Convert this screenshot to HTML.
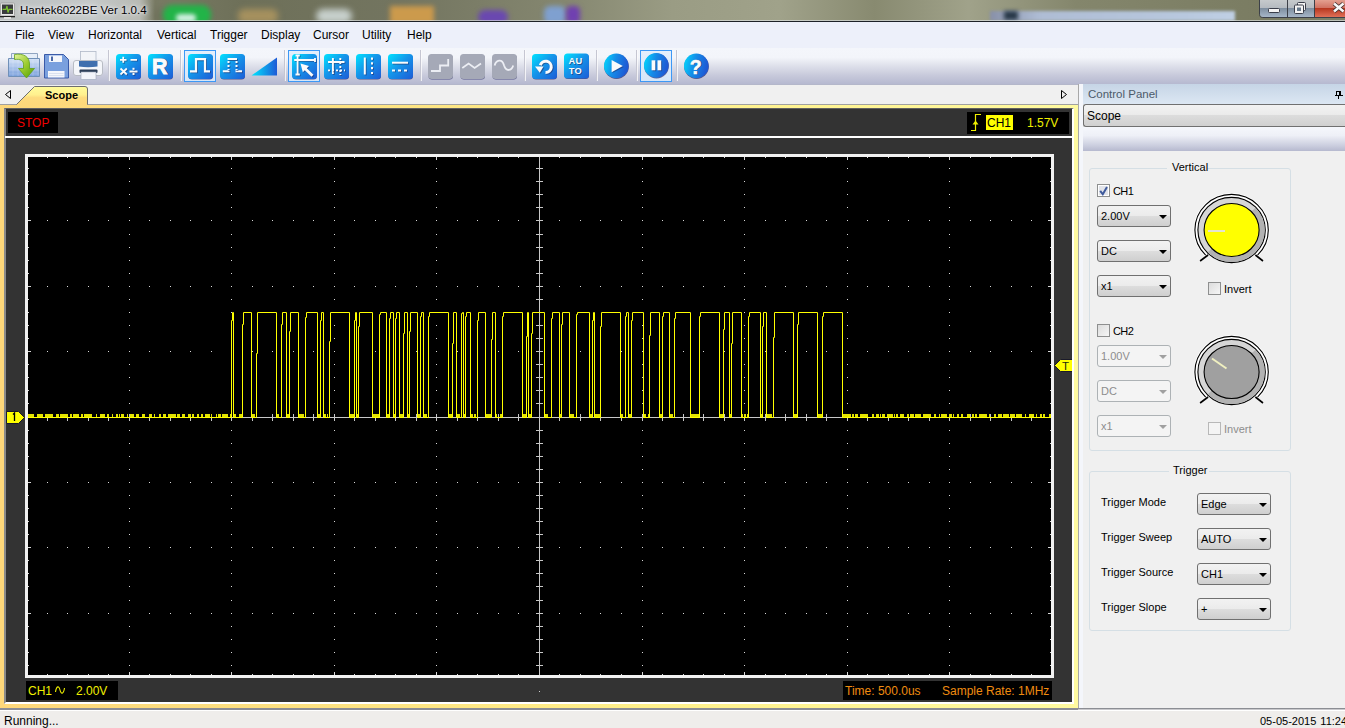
<!DOCTYPE html>
<html><head><meta charset="utf-8">
<style>
*{box-sizing:border-box}
html,body{margin:0;padding:0;width:1345px;height:728px;overflow:hidden;background:#f0f0f0;font-family:"Liberation Sans",sans-serif;font-size:12px;color:#000}
.a{position:absolute}
#title{left:0;top:0;width:1345px;height:22px;background:linear-gradient(90deg,#b8bbb6 0%,#7a7c64 11%,#6e7059 18%,#737560 30%,#858770 42%,#9a9c84 50%,#a0a28a 58%,#888a70 65%,#a0a28a 72%,#84866c 80%,#7a7c62 94%,#7c8068 100%);overflow:hidden}
#title .t{left:20px;top:4px;font-size:11.5px;color:#000;text-shadow:0 0 6px #fff,0 0 3px #eef}
#menu{left:0;top:22px;width:1345px;height:26px;background:#edf0fa}
#menu span{position:absolute;top:6px;font-size:12px}
#tool{left:0;top:48px;width:1345px;height:36px;background:linear-gradient(#f4f6fb 0%,#f3f5fa 26%,#dcdee9 52%,#c6c8da 78%,#b6b9d0 100%)}
.sep{position:absolute;top:5px;width:1px;height:27px;background:#c9cad6;border-right:1px solid #fafafd}
.ic{position:absolute;top:6px;width:25px;height:25px;border-radius:4px;background:linear-gradient(135deg,#08d8f8 0%,#1a8ee8 45%,#1c5fd0 100%);box-shadow:0 1px 1px rgba(20,20,80,.6)}
.gic{position:absolute;top:6px;width:25px;height:25px;border-radius:4px;background:#a9abb6;box-shadow:0 1px 1px rgba(60,60,80,.4)}
.sel{position:absolute;top:2px;width:32px;height:32px;background:#dcebfb;border:1px solid #3d98f5}
#tabbar{left:0;top:84px;width:1078px;height:21px;background:#f0f0f0}
#frame{left:0;top:105px;width:1078px;height:605px;background:linear-gradient(90deg,#fdd77a 0%,#fee683 40%,#fff08a 60%,#fffaa0 100%);border-bottom:2px solid #8c8e96}
#dark{left:4px;top:108px;width:1070px;height:596px;background:#333;border-left:2px solid #8a8a8a;border-top:1px solid #606060;border-right:2px solid #fff;border-bottom:2px solid #fff}
#cp{left:1078px;top:84px;width:267px;height:626px;background:#f0f0f0}
#status{left:0;top:710px;width:1345px;height:18px;background:#efedeb;border-top:1px solid #fff}
.chk{position:absolute;width:13px;height:13px;border:1px solid #8e8f8f;background:linear-gradient(135deg,#dcdcdc,#f6f6f6)}
.cb{position:absolute;height:22px;border:1px solid #707070;border-radius:3px;background:linear-gradient(#f2f2f2 0%,#ebebeb 50%,#dddddd 51%,#cfcfcf 100%);font-size:11px;padding-left:3px;line-height:21px}
.cb:after{content:"";position:absolute;right:3px;top:9px;border-left:4px solid transparent;border-right:4px solid transparent;border-top:4px solid #000}
.cb.dis{border-color:#adb2b5;background:#f4f4f4;color:#8d8d8d}
.cb.dis:after{border-top-color:#a0a0a0}
.grp{position:absolute;border:1px solid #d5dfe5;border-radius:3px}
.lbl{position:absolute;font-size:11px}
</style></head><body>
<div id="title" class="a">
  <div class="a" style="left:150px;top:0;width:40px;height:22px;background:linear-gradient(#7a7c66,#6c6e58);filter:blur(4px)"></div>
  <div class="a" style="left:163px;top:5px;width:48px;height:20px;background:#22b448;border-radius:9px;filter:blur(2.5px)"></div>
  <div class="a" style="left:176px;top:14px;width:20px;height:8px;background:#d0f0e0;border-radius:5px;filter:blur(2px)"></div>
  <div class="a" style="left:238px;top:9px;width:40px;height:14px;background:#a6915e;border-radius:6px;filter:blur(3px)"></div>
  <div class="a" style="left:316px;top:9px;width:36px;height:14px;background:#c7d0cc;border-radius:7px;filter:blur(3px)"></div>
  <div class="a" style="left:390px;top:6px;width:44px;height:18px;background:#cc9a4c;filter:blur(2.5px)"></div>
  <div class="a" style="left:478px;top:10px;width:30px;height:14px;background:#6a48b0;border-radius:8px;filter:blur(2.5px)"></div>
  <div class="a" style="left:544px;top:6px;width:22px;height:18px;background:#7fa0d0;border-radius:6px;filter:blur(2.5px)"></div>
  <div class="a" style="left:566px;top:6px;width:14px;height:18px;background:#7040b0;border-radius:5px;filter:blur(2.5px)"></div>
  <div class="a" style="left:990px;top:11px;width:245px;height:10px;background:linear-gradient(90deg,#8890a8,#aebcd4 20%,#b8c8de 80%,#c0d0e4);filter:blur(1.5px)"></div>
  <div class="a" style="left:1004px;top:11px;width:14px;height:9px;background:#283848;filter:blur(2px)"></div>
  <div class="a" style="left:0;top:0;width:155px;height:21px;background:linear-gradient(90deg,#bcc0c0 0%,#c4c8c8 60%,#b8bab4 90%,rgba(184,186,180,0) 100%)"></div>
  <svg class="a" style="left:0;top:0" width="1345" height="22">
    <rect x="0.5" y="3" width="14" height="13" rx="1" fill="#e8e8e8" stroke="#9a9a9a" stroke-width="0.8"/>
    <rect x="2" y="4.5" width="11" height="9.5" fill="#3a3c3e"/>
    <path d="M2.5,9.3 H6 L7,6 L8,12.5 L9,9.3 H12.5" fill="none" stroke="#7cc030" stroke-width="1.2"/>
    <rect x="0" y="16" width="15" height="1.3" fill="#202020"/>
    <rect x="4" y="17" width="7" height="2" fill="#e0e0e0"/>
    <path d="M1259.5,0 V14.5 Q1259.5,17.5 1262.5,17.5 H1345" fill="none" stroke="#3c4048" stroke-width="1"/>
    <path d="M1260,0 H1287 V17 H1263 Q1260,17 1260,14 Z" fill="url(#tbg)"/>
    <rect x="1288" y="0" width="26" height="17" fill="url(#tbg)"/>
    <rect x="1315" y="0" width="30" height="17" fill="url(#tbr)"/>
    <path d="M1287.5,0 V17 M1314.5,0 V17" stroke="#3c4048" stroke-width="1"/>
    <rect x="1268.5" y="8.5" width="11" height="4" rx="1" fill="#f4f4f4" stroke="#3a3e4a" stroke-width="1"/>
    <rect x="1297.5" y="2.5" width="8" height="8" rx="1" fill="#f4f4f4" stroke="#3a3e4a" stroke-width="1"/>
    <rect x="1294.5" y="5" width="9" height="8.5" rx="1" fill="#f4f4f4" stroke="#3a3e4a" stroke-width="1"/>
    <rect x="1297" y="7.5" width="4" height="3.5" fill="#66788a"/>
    <path d="M1334,3.5 L1343.5,11.5 M1343.5,3.5 L1334,11.5" stroke="#3a2a2a" stroke-width="4.2"/>
    <path d="M1334,3.5 L1343.5,11.5 M1343.5,3.5 L1334,11.5" stroke="#f8f8f8" stroke-width="2.6"/>
    <defs>
      <linearGradient id="tbg" x1="0" y1="0" x2="0" y2="1"><stop offset="0" stop-color="#c6cacc"/><stop offset="0.48" stop-color="#b4bac0"/><stop offset="0.5" stop-color="#7f8fa0"/><stop offset="1" stop-color="#a6b6c8"/></linearGradient>
      <linearGradient id="tbr" x1="0" y1="0" x2="0" y2="1"><stop offset="0" stop-color="#e4a090"/><stop offset="0.48" stop-color="#d07060"/><stop offset="0.5" stop-color="#b83820"/><stop offset="1" stop-color="#e07058"/></linearGradient>
    </defs>
    <rect x="0" y="20" width="1345" height="1" fill="#e8ecf0" opacity="0.6"/>
    <rect x="0" y="21" width="1345" height="1" fill="#1e2228"/>
  </svg>
  <div class="t a">Hantek6022BE Ver 1.0.4</div>
</div>
<div id="menu" class="a">
  <span style="left:15px">File</span>
  <span style="left:48px">View</span>
  <span style="left:88px">Horizontal</span>
  <span style="left:157px">Vertical</span>
  <span style="left:210px">Trigger</span>
  <span style="left:261px">Display</span>
  <span style="left:313px">Cursor</span>
  <span style="left:362px">Utility</span>
  <span style="left:407px">Help</span>
</div>
<div id="tool" class="a">
<svg class="a" style="left:0;top:0" width="720" height="36" viewBox="0 48 720 36"><defs>
<linearGradient id="gb" x1="0" y1="0" x2="1" y2="1"><stop offset="0" stop-color="#00e4ff"/><stop offset="0.45" stop-color="#1496ea"/><stop offset="1" stop-color="#1d5cd6"/></linearGradient>
<linearGradient id="gc" x1="0" y1="0" x2="1" y2="0.25"><stop offset="0" stop-color="#00e0ff"/><stop offset="0.5" stop-color="#148ce8"/><stop offset="1" stop-color="#1e5ad4"/></linearGradient>
<linearGradient id="gt" x1="0" y1="0" x2="1" y2="0"><stop offset="0" stop-color="#00e6ff"/><stop offset="1" stop-color="#1e5ad6"/></linearGradient>
<linearGradient id="gsel" x1="0" y1="0" x2="0" y2="1"><stop offset="0" stop-color="#e4effc"/><stop offset="1" stop-color="#d6e6f8"/></linearGradient>
<linearGradient id="gfold" x1="0" y1="0" x2="0" y2="1"><stop offset="0" stop-color="#d4e2f6"/><stop offset="1" stop-color="#7aa0dc"/></linearGradient>
<linearGradient id="garr" x1="0" y1="0" x2="1" y2="1"><stop offset="0" stop-color="#e4f49a"/><stop offset="0.5" stop-color="#9ccc30"/><stop offset="1" stop-color="#50a000"/></linearGradient>
</defs><path d="M11.5,53.5 H37.5 V60 H11.5 Z" fill="#e6eef8" stroke="#90a4c0" stroke-width="1"/><path d="M8.5,58.5 H39.5 V76.5 H8.5 Z" fill="url(#gfold)" stroke="#7090b8" stroke-width="1"/><path d="M9,62 H39 M9,66 H39 M9,70 H39 M9,74 H39 M13,59 V76 M18,59 V76 M23,59 V76 M28,59 V76 M33,59 V76 M38,59 V76" stroke="#ffffff" stroke-width="0.5" opacity="0.35"/><path d="M14.5,54.5 C24,53 29.5,57 29.5,64 L29.5,68.5 L34.5,68.5 L26.5,78 L18.5,68.5 L23.5,68.5 L23.5,64.5 C23.5,60.5 20.5,58.8 14.5,59.5 Z" fill="url(#garr)" stroke="#62a018" stroke-width="0.8"/><path d="M44.5,54.5 H63.5 L68.5,59.5 V78 H44.5 Z" fill="#7aa0de" stroke="#3a5aa8" stroke-width="1"/><rect x="49" y="55.5" width="13" height="6.5" fill="#f4f6fb"/><rect x="51" y="56.5" width="2" height="4.5" fill="#4a68a8"/><rect x="48" y="71" width="16.5" height="6.5" fill="#f4f6fb"/><path d="M49,73.5 H63.5 M49,75.5 H63.5" stroke="#c8d4e8" stroke-width="0.6"/><rect x="80.5" y="51.5" width="15.5" height="10" fill="#f2f4f8" stroke="#b0b8c8" stroke-width="0.8"/><rect x="73.5" y="60.5" width="29" height="15" rx="2.5" fill="#f4f6fa" stroke="#b8bcc4" stroke-width="1"/><path d="M79,61 H97.5 V66.5 Q88,68 79,66.5 Z" fill="#3f6fae"/><rect x="79.5" y="69.5" width="18" height="3.5" rx="1" fill="#2c3e58"/><rect x="81" y="72" width="15" height="7.5" fill="#f2f4fa" stroke="#9aa6b8" stroke-width="0.6"/><rect x="108" y="50" width="1" height="31" fill="#c5c6d2"/><rect x="109" y="50" width="1" height="31" fill="#fbfbfd" opacity="0.8"/><rect x="116.5" y="55" width="24.5" height="24.5" rx="3.5" fill="#28286a" opacity="0.75"/><rect x="116" y="54" width="25" height="25" rx="3.5" fill="url(#gb)"/><g transform="translate(0.9,0.9)" opacity="0.55"><path d="M120,59.8 H126.5 M123.25,56.8 V62.8 M130.5,59.8 H137" stroke="#262c60" stroke-width="1.8"/></g><path d="M120,59.8 H126.5 M123.25,56.8 V62.8 M130.5,59.8 H137" stroke="#fbfbfb" stroke-width="1.8"/><g transform="translate(0.9,0.9)" opacity="0.55"><path d="M120.5,68.5 L126.8,74.5 M126.8,68.5 L120.5,74.5 M129.5,71.5 H137.5" stroke="#262c60" stroke-width="1.8"/></g><path d="M120.5,68.5 L126.8,74.5 M126.8,68.5 L120.5,74.5 M129.5,71.5 H137.5" stroke="#fbfbfb" stroke-width="1.8"/><g transform="translate(0.9,0.9)" opacity="0.55"><rect x="132.5" y="67.8" width="2" height="2" fill="#262c60"/><rect x="132.5" y="73" width="2" height="2" fill="#262c60"/></g><rect x="132.5" y="67.8" width="2" height="2" fill="#fbfbfb"/><rect x="132.5" y="73" width="2" height="2" fill="#fbfbfb"/><rect x="148.5" y="55" width="24.5" height="24.5" rx="3.5" fill="#28286a" opacity="0.75"/><rect x="148" y="54" width="25" height="25" rx="3.5" fill="url(#gb)"/><g transform="translate(0.9,0.9)" opacity="0.55"><text x="152" y="73.5" font-family="Liberation Sans" font-weight="bold" font-size="21.5" fill="#262c60" stroke="#262c60" stroke-width="0.9">R</text></g><text x="152" y="73.5" font-family="Liberation Sans" font-weight="bold" font-size="21.5" fill="#fbfbfb" stroke="#fbfbfb" stroke-width="0.9">R</text><rect x="180" y="50" width="1" height="31" fill="#c5c6d2"/><rect x="181" y="50" width="1" height="31" fill="#fbfbfd" opacity="0.8"/><rect x="184.5" y="50.5" width="31" height="31" fill="url(#gsel)" stroke="#3d98f5" stroke-width="1"/><rect x="188.5" y="55" width="24.5" height="24.5" rx="3.5" fill="#28286a" opacity="0.75"/><rect x="188" y="54" width="25" height="25" rx="3.5" fill="url(#gb)"/><g transform="translate(0.9,0.9)" opacity="0.55"><path d="M190,71.3 H196 V59.2 H205 V71.3 H210" fill="none" stroke="#262c60" stroke-width="2.2"/></g><path d="M190,71.3 H196 V59.2 H205 V71.3 H210" fill="none" stroke="#fbfbfb" stroke-width="2.2"/><rect x="220.5" y="55" width="24.5" height="24.5" rx="3.5" fill="#28286a" opacity="0.75"/><rect x="220" y="54" width="25" height="25" rx="3.5" fill="url(#gb)"/><g transform="translate(0.9,0.9)" opacity="0.55"><path d="M227.5,59 H237 M222.8,71.3 H229.5 M235.5,71.3 H242" stroke="#262c60" stroke-width="2"/></g><path d="M227.5,59 H237 M222.8,71.3 H229.5 M235.5,71.3 H242" stroke="#fbfbfb" stroke-width="2"/><g transform="translate(0.9,0.9)" opacity="0.55"><path d="M228.5,61 V70 M236.5,61 V70" stroke="#262c60" stroke-width="2" stroke-dasharray="2,2"/></g><path d="M228.5,61 V70 M236.5,61 V70" stroke="#fbfbfb" stroke-width="2" stroke-dasharray="2,2"/><path d="M251.5,75.5 L277,57.5 L277,75.5 Z" fill="url(#gt)"/><rect x="284" y="50" width="1" height="31" fill="#c5c6d2"/><rect x="285" y="50" width="1" height="31" fill="#fbfbfd" opacity="0.8"/><rect x="288.5" y="50.5" width="31" height="31" fill="url(#gsel)" stroke="#3d98f5" stroke-width="1"/><rect x="292.5" y="55" width="24.5" height="24.5" rx="3.5" fill="#28286a" opacity="0.75"/><rect x="292" y="54" width="25" height="25" rx="3.5" fill="url(#gb)"/><g transform="translate(0.9,0.9)" opacity="0.55"><path d="M297.6,55.5 V74.5 M295.5,55.5 H299.8 M295.5,74.5 H299.8 M294.2,60 H315 M315,58 V62" stroke="#262c60" stroke-width="1.8"/></g><path d="M297.6,55.5 V74.5 M295.5,55.5 H299.8 M295.5,74.5 H299.8 M294.2,60 H315 M315,58 V62" stroke="#fbfbfb" stroke-width="1.8"/><g transform="translate(0.9,0.9)" opacity="0.55"><path d="M300.5,63.5 L309,66 L306.8,68.2 L313.5,74.8 L311.5,76.8 L304.8,70.2 L302.8,72.2 Z" fill="#262c60"/></g><path d="M300.5,63.5 L309,66 L306.8,68.2 L313.5,74.8 L311.5,76.8 L304.8,70.2 L302.8,72.2 Z" fill="#fbfbfb"/><rect x="324.5" y="55" width="24.5" height="24.5" rx="3.5" fill="#28286a" opacity="0.75"/><rect x="324" y="54" width="25" height="25" rx="3.5" fill="url(#gb)"/><g transform="translate(0.9,0.9)" opacity="0.55"><path d="M332.9,58 V74 M328,62 H344.5" stroke="#262c60" stroke-width="1.9"/></g><path d="M332.9,58 V74 M328,62 H344.5" stroke="#fbfbfb" stroke-width="1.9"/><g transform="translate(0.9,0.9)" opacity="0.55"><path d="M340.3,58 V75 M328,70.4 H345" stroke="#262c60" stroke-width="1.9" stroke-dasharray="2,2"/></g><path d="M340.3,58 V75 M328,70.4 H345" stroke="#fbfbfb" stroke-width="1.9" stroke-dasharray="2,2"/><rect x="356.5" y="55" width="24.5" height="24.5" rx="3.5" fill="#28286a" opacity="0.75"/><rect x="356" y="54" width="25" height="25" rx="3.5" fill="url(#gb)"/><g transform="translate(0.9,0.9)" opacity="0.55"><path d="M364.8,57.5 V74.5" stroke="#262c60" stroke-width="2"/></g><path d="M364.8,57.5 V74.5" stroke="#fbfbfb" stroke-width="2"/><g transform="translate(0.9,0.9)" opacity="0.55"><path d="M372,57.5 V75" stroke="#262c60" stroke-width="2" stroke-dasharray="2.2,2.6"/></g><path d="M372,57.5 V75" stroke="#fbfbfb" stroke-width="2" stroke-dasharray="2.2,2.6"/><rect x="388.5" y="55" width="24.5" height="24.5" rx="3.5" fill="#28286a" opacity="0.75"/><rect x="388" y="54" width="25" height="25" rx="3.5" fill="url(#gb)"/><g transform="translate(0.9,0.9)" opacity="0.55"><path d="M392,62.7 H408" stroke="#262c60" stroke-width="2"/></g><path d="M392,62.7 H408" stroke="#fbfbfb" stroke-width="2"/><g transform="translate(0.9,0.9)" opacity="0.55"><path d="M392,70.4 H409" stroke="#262c60" stroke-width="2" stroke-dasharray="3,3"/></g><path d="M392,70.4 H409" stroke="#fbfbfb" stroke-width="2" stroke-dasharray="3,3"/><rect x="420" y="50" width="1" height="31" fill="#c5c6d2"/><rect x="421" y="50" width="1" height="31" fill="#fbfbfd" opacity="0.8"/><rect x="428.5" y="55" width="24.5" height="24.5" rx="3.5" fill="#28286a" opacity="0.75"/><rect x="428" y="54" width="25" height="25" rx="3.5" fill="#a5a9b7"/><path d="M431,71 H440 V65.5 H448.2 V59" fill="none" stroke="#eceef4" stroke-width="1.8"/><rect x="460.5" y="55" width="24.5" height="24.5" rx="3.5" fill="#28286a" opacity="0.75"/><rect x="460" y="54" width="25" height="25" rx="3.5" fill="#a5a9b7"/><path d="M462.3,68 L468.6,63.6 L474.6,68 L481,63.6" fill="none" stroke="#eceef4" stroke-width="1.8"/><rect x="492.5" y="55" width="24.5" height="24.5" rx="3.5" fill="#28286a" opacity="0.75"/><rect x="492" y="54" width="25" height="25" rx="3.5" fill="#a5a9b7"/><path d="M494.6,65.5 C496,60 502,58 504,65.3 C506,72 511.5,71 513.2,65.5" fill="none" stroke="#eceef4" stroke-width="1.8"/><rect x="524" y="50" width="1" height="31" fill="#c5c6d2"/><rect x="525" y="50" width="1" height="31" fill="#fbfbfd" opacity="0.8"/><rect x="532.5" y="55" width="24.5" height="24.5" rx="3.5" fill="#28286a" opacity="0.75"/><rect x="532" y="54" width="25" height="25" rx="3.5" fill="url(#gb)"/><g transform="translate(0.9,0.9)" opacity="0.55"><path d="M540.3,65.2 A5.6,5.6 0 1 1 545.5,72.4" fill="none" stroke="#262c60" stroke-width="3"/></g><path d="M540.3,65.2 A5.6,5.6 0 1 1 545.5,72.4" fill="none" stroke="#fbfbfb" stroke-width="3"/><g transform="translate(0.9,0.9)" opacity="0.55"><path d="M535,66.5 L543.5,66.5 L539.8,72.8 Z" fill="#262c60"/></g><path d="M535,66.5 L543.5,66.5 L539.8,72.8 Z" fill="#fbfbfb"/><rect x="564.5" y="54.5" width="24.5" height="24.5" rx="3.5" fill="#28286a" opacity="0.75"/><rect x="564" y="53.5" width="25" height="25" rx="3.5" fill="url(#gb)"/><g transform="translate(0.9,0.9)" opacity="0.55"><text x="568.6" y="64" font-family="Liberation Sans" font-weight="bold" font-size="9.3" fill="#262c60" letter-spacing="0.3">AU</text></g><text x="568.6" y="64" font-family="Liberation Sans" font-weight="bold" font-size="9.3" fill="#fbfbfb" letter-spacing="0.3">AU</text><g transform="translate(0.9,0.9)" opacity="0.55"><text x="568.8" y="74.2" font-family="Liberation Sans" font-weight="bold" font-size="9.3" fill="#262c60" letter-spacing="0.3">TO</text></g><text x="568.8" y="74.2" font-family="Liberation Sans" font-weight="bold" font-size="9.3" fill="#fbfbfb" letter-spacing="0.3">TO</text><rect x="596" y="50" width="1" height="31" fill="#c5c6d2"/><rect x="597" y="50" width="1" height="31" fill="#fbfbfd" opacity="0.8"/><circle cx="616.5" cy="66.5" r="12.4" fill="#28286a" opacity="0.7"/><circle cx="616.3" cy="65.9" r="12.3" fill="url(#gc)"/><g transform="translate(0.9,0.9)" opacity="0.55"><path d="M611.6,59.9 L622.8,66 L611.6,72.2 Z" fill="#262c60"/></g><path d="M611.6,59.9 L622.8,66 L611.6,72.2 Z" fill="#fbfbfb"/><rect x="636" y="50" width="1" height="31" fill="#c5c6d2"/><rect x="637" y="50" width="1" height="31" fill="#fbfbfd" opacity="0.8"/><rect x="640.5" y="50.5" width="31" height="31" fill="url(#gsel)" stroke="#3d98f5" stroke-width="1"/><circle cx="656.5" cy="66" r="12.4" fill="#28286a" opacity="0.7"/><circle cx="656.3" cy="65.4" r="12.3" fill="url(#gc)"/><g transform="translate(0.9,0.9)" opacity="0.55"><rect x="651.6" y="60.3" width="3.7" height="10" fill="#262c60"/><rect x="657.5" y="60.3" width="3.7" height="10" fill="#262c60"/></g><rect x="651.6" y="60.3" width="3.7" height="10" fill="#fbfbfb"/><rect x="657.5" y="60.3" width="3.7" height="10" fill="#fbfbfb"/><rect x="676" y="50" width="1" height="31" fill="#c5c6d2"/><rect x="677" y="50" width="1" height="31" fill="#fbfbfd" opacity="0.8"/><circle cx="696.5" cy="66.5" r="12.4" fill="#28286a" opacity="0.7"/><circle cx="696.3" cy="65.9" r="12.3" fill="url(#gc)"/><g transform="translate(0.9,0.9)" opacity="0.55"><text x="689.8" y="73.6" font-family="Liberation Sans" font-weight="bold" font-size="19.5" fill="#262c60" stroke="#262c60" stroke-width="0.6">?</text></g><text x="689.8" y="73.6" font-family="Liberation Sans" font-weight="bold" font-size="19.5" fill="#fbfbfb" stroke="#fbfbfb" stroke-width="0.6">?</text></svg>
</div>
<div id="tabbar" class="a">
  <svg class="a" style="left:0;top:0" width="1078" height="21" viewBox="0 84 1078 21">
    <defs><linearGradient id="gtab" x1="0" y1="0" x2="0" y2="1"><stop offset="0" stop-color="#fffc9c"/><stop offset="0.45" stop-color="#fff08e"/><stop offset="0.6" stop-color="#fddb7e"/><stop offset="1" stop-color="#fdd77a"/></linearGradient></defs>
    <path d="M0,84.5 H1078" stroke="#b4b7ca" stroke-width="1"/>
    <path d="M16.5,104.5 L34.5,86.5 H85 Q87.5,86.5 87.5,89 V105 H16.5 Z" fill="url(#gtab)"/>
    <path d="M0,104.5 H16.5 L34.5,86.5 H85 Q87.5,86.5 87.5,89 V104.5 H1078" fill="none" stroke="#6e6e6e" stroke-width="1"/>
    <path d="M88,104.5 H1078 M0,104.5 H16" stroke="#a0a0a0" stroke-width="1"/>
    <path d="M10.5,90.5 L5.5,94.5 L10.5,98.5 Z" fill="none" stroke="#000" stroke-width="1"/>
    <path d="M1061.5,90.5 L1066.5,94.5 L1061.5,98.5 Z" fill="none" stroke="#000" stroke-width="1"/>
  </svg>
  <div class="a" style="left:45px;top:5px;font-size:11px;font-weight:bold">Scope</div>
</div>
<div id="frame" class="a"></div>
<div id="dark" class="a"></div>
<!--SCOPE-->
<div class="a" style="left:8px;top:112px;width:50px;height:21px;background:#000"></div>
<div class="a" style="left:17px;top:116px;font-size:12px;color:#f00000">STOP</div>
<div class="a" style="left:967px;top:112px;width:102px;height:22px;background:#000"></div>
<div class="a" style="left:986px;top:115px;width:27px;height:15px;background:#ffff00"></div>
<div class="a" style="left:987px;top:116px;font-size:12px;color:#000">CH1</div>
<div class="a" style="left:1027px;top:116px;font-size:12px;color:#f0f000">1.57V</div>
<div class="a" style="left:5px;top:136px;width:1067px;height:2px;background:#fff"></div>
<div class="a" style="left:25px;top:154px;width:1029px;height:524px;background:#f2f2f2"></div>
<div class="a" style="left:26px;top:681px;width:92px;height:19px;background:#000"></div>
<div class="a" style="left:28px;top:684px;font-size:12px;color:#f0f000">CH1</div>
<div class="a" style="left:76px;top:684px;font-size:12px;color:#f0f000">2.00V</div>
<div class="a" style="left:843px;top:681px;width:209px;height:19px;background:#000"></div>
<div class="a" style="left:845px;top:684px;font-size:12px;color:#f08c10">Time: 500.0us</div>
<div class="a" style="left:942px;top:684px;font-size:12px;color:#f08c10">Sample Rate: 1MHz</div>
<svg class="a" style="left:0;top:0" width="1345" height="728" viewBox="0 0 1345 728"><rect x="28" y="157" width="1023" height="518" fill="#000"/><rect x="129" y="168" width="1" height="1" fill="#d8d8d8"/><rect x="129" y="181" width="1" height="1" fill="#d8d8d8"/><rect x="129" y="194" width="1" height="1" fill="#d8d8d8"/><rect x="129" y="207" width="1" height="1" fill="#d8d8d8"/><rect x="129" y="220" width="1" height="1" fill="#d8d8d8"/><rect x="129" y="234" width="1" height="1" fill="#d8d8d8"/><rect x="129" y="247" width="1" height="1" fill="#d8d8d8"/><rect x="129" y="260" width="1" height="1" fill="#d8d8d8"/><rect x="129" y="273" width="1" height="1" fill="#d8d8d8"/><rect x="129" y="286" width="1" height="1" fill="#d8d8d8"/><rect x="129" y="299" width="1" height="1" fill="#d8d8d8"/><rect x="129" y="312" width="1" height="1" fill="#d8d8d8"/><rect x="129" y="325" width="1" height="1" fill="#d8d8d8"/><rect x="129" y="338" width="1" height="1" fill="#d8d8d8"/><rect x="129" y="351" width="1" height="1" fill="#d8d8d8"/><rect x="129" y="364" width="1" height="1" fill="#d8d8d8"/><rect x="129" y="377" width="1" height="1" fill="#d8d8d8"/><rect x="129" y="390" width="1" height="1" fill="#d8d8d8"/><rect x="129" y="403" width="1" height="1" fill="#d8d8d8"/><rect x="129" y="417" width="1" height="1" fill="#d8d8d8"/><rect x="129" y="430" width="1" height="1" fill="#d8d8d8"/><rect x="129" y="443" width="1" height="1" fill="#d8d8d8"/><rect x="129" y="456" width="1" height="1" fill="#d8d8d8"/><rect x="129" y="469" width="1" height="1" fill="#d8d8d8"/><rect x="129" y="482" width="1" height="1" fill="#d8d8d8"/><rect x="129" y="495" width="1" height="1" fill="#d8d8d8"/><rect x="129" y="508" width="1" height="1" fill="#d8d8d8"/><rect x="129" y="521" width="1" height="1" fill="#d8d8d8"/><rect x="129" y="534" width="1" height="1" fill="#d8d8d8"/><rect x="129" y="547" width="1" height="1" fill="#d8d8d8"/><rect x="129" y="560" width="1" height="1" fill="#d8d8d8"/><rect x="129" y="573" width="1" height="1" fill="#d8d8d8"/><rect x="129" y="586" width="1" height="1" fill="#d8d8d8"/><rect x="129" y="600" width="1" height="1" fill="#d8d8d8"/><rect x="129" y="613" width="1" height="1" fill="#d8d8d8"/><rect x="129" y="626" width="1" height="1" fill="#d8d8d8"/><rect x="129" y="639" width="1" height="1" fill="#d8d8d8"/><rect x="129" y="652" width="1" height="1" fill="#d8d8d8"/><rect x="129" y="665" width="1" height="1" fill="#d8d8d8"/><rect x="231" y="168" width="1" height="1" fill="#d8d8d8"/><rect x="231" y="181" width="1" height="1" fill="#d8d8d8"/><rect x="231" y="194" width="1" height="1" fill="#d8d8d8"/><rect x="231" y="207" width="1" height="1" fill="#d8d8d8"/><rect x="231" y="220" width="1" height="1" fill="#d8d8d8"/><rect x="231" y="234" width="1" height="1" fill="#d8d8d8"/><rect x="231" y="247" width="1" height="1" fill="#d8d8d8"/><rect x="231" y="260" width="1" height="1" fill="#d8d8d8"/><rect x="231" y="273" width="1" height="1" fill="#d8d8d8"/><rect x="231" y="286" width="1" height="1" fill="#d8d8d8"/><rect x="231" y="299" width="1" height="1" fill="#d8d8d8"/><rect x="231" y="312" width="1" height="1" fill="#d8d8d8"/><rect x="231" y="325" width="1" height="1" fill="#d8d8d8"/><rect x="231" y="338" width="1" height="1" fill="#d8d8d8"/><rect x="231" y="351" width="1" height="1" fill="#d8d8d8"/><rect x="231" y="364" width="1" height="1" fill="#d8d8d8"/><rect x="231" y="377" width="1" height="1" fill="#d8d8d8"/><rect x="231" y="390" width="1" height="1" fill="#d8d8d8"/><rect x="231" y="403" width="1" height="1" fill="#d8d8d8"/><rect x="231" y="417" width="1" height="1" fill="#d8d8d8"/><rect x="231" y="430" width="1" height="1" fill="#d8d8d8"/><rect x="231" y="443" width="1" height="1" fill="#d8d8d8"/><rect x="231" y="456" width="1" height="1" fill="#d8d8d8"/><rect x="231" y="469" width="1" height="1" fill="#d8d8d8"/><rect x="231" y="482" width="1" height="1" fill="#d8d8d8"/><rect x="231" y="495" width="1" height="1" fill="#d8d8d8"/><rect x="231" y="508" width="1" height="1" fill="#d8d8d8"/><rect x="231" y="521" width="1" height="1" fill="#d8d8d8"/><rect x="231" y="534" width="1" height="1" fill="#d8d8d8"/><rect x="231" y="547" width="1" height="1" fill="#d8d8d8"/><rect x="231" y="560" width="1" height="1" fill="#d8d8d8"/><rect x="231" y="573" width="1" height="1" fill="#d8d8d8"/><rect x="231" y="586" width="1" height="1" fill="#d8d8d8"/><rect x="231" y="600" width="1" height="1" fill="#d8d8d8"/><rect x="231" y="613" width="1" height="1" fill="#d8d8d8"/><rect x="231" y="626" width="1" height="1" fill="#d8d8d8"/><rect x="231" y="639" width="1" height="1" fill="#d8d8d8"/><rect x="231" y="652" width="1" height="1" fill="#d8d8d8"/><rect x="231" y="665" width="1" height="1" fill="#d8d8d8"/><rect x="334" y="168" width="1" height="1" fill="#d8d8d8"/><rect x="334" y="181" width="1" height="1" fill="#d8d8d8"/><rect x="334" y="194" width="1" height="1" fill="#d8d8d8"/><rect x="334" y="207" width="1" height="1" fill="#d8d8d8"/><rect x="334" y="220" width="1" height="1" fill="#d8d8d8"/><rect x="334" y="234" width="1" height="1" fill="#d8d8d8"/><rect x="334" y="247" width="1" height="1" fill="#d8d8d8"/><rect x="334" y="260" width="1" height="1" fill="#d8d8d8"/><rect x="334" y="273" width="1" height="1" fill="#d8d8d8"/><rect x="334" y="286" width="1" height="1" fill="#d8d8d8"/><rect x="334" y="299" width="1" height="1" fill="#d8d8d8"/><rect x="334" y="312" width="1" height="1" fill="#d8d8d8"/><rect x="334" y="325" width="1" height="1" fill="#d8d8d8"/><rect x="334" y="338" width="1" height="1" fill="#d8d8d8"/><rect x="334" y="351" width="1" height="1" fill="#d8d8d8"/><rect x="334" y="364" width="1" height="1" fill="#d8d8d8"/><rect x="334" y="377" width="1" height="1" fill="#d8d8d8"/><rect x="334" y="390" width="1" height="1" fill="#d8d8d8"/><rect x="334" y="403" width="1" height="1" fill="#d8d8d8"/><rect x="334" y="417" width="1" height="1" fill="#d8d8d8"/><rect x="334" y="430" width="1" height="1" fill="#d8d8d8"/><rect x="334" y="443" width="1" height="1" fill="#d8d8d8"/><rect x="334" y="456" width="1" height="1" fill="#d8d8d8"/><rect x="334" y="469" width="1" height="1" fill="#d8d8d8"/><rect x="334" y="482" width="1" height="1" fill="#d8d8d8"/><rect x="334" y="495" width="1" height="1" fill="#d8d8d8"/><rect x="334" y="508" width="1" height="1" fill="#d8d8d8"/><rect x="334" y="521" width="1" height="1" fill="#d8d8d8"/><rect x="334" y="534" width="1" height="1" fill="#d8d8d8"/><rect x="334" y="547" width="1" height="1" fill="#d8d8d8"/><rect x="334" y="560" width="1" height="1" fill="#d8d8d8"/><rect x="334" y="573" width="1" height="1" fill="#d8d8d8"/><rect x="334" y="586" width="1" height="1" fill="#d8d8d8"/><rect x="334" y="600" width="1" height="1" fill="#d8d8d8"/><rect x="334" y="613" width="1" height="1" fill="#d8d8d8"/><rect x="334" y="626" width="1" height="1" fill="#d8d8d8"/><rect x="334" y="639" width="1" height="1" fill="#d8d8d8"/><rect x="334" y="652" width="1" height="1" fill="#d8d8d8"/><rect x="334" y="665" width="1" height="1" fill="#d8d8d8"/><rect x="436" y="168" width="1" height="1" fill="#d8d8d8"/><rect x="436" y="181" width="1" height="1" fill="#d8d8d8"/><rect x="436" y="194" width="1" height="1" fill="#d8d8d8"/><rect x="436" y="207" width="1" height="1" fill="#d8d8d8"/><rect x="436" y="220" width="1" height="1" fill="#d8d8d8"/><rect x="436" y="234" width="1" height="1" fill="#d8d8d8"/><rect x="436" y="247" width="1" height="1" fill="#d8d8d8"/><rect x="436" y="260" width="1" height="1" fill="#d8d8d8"/><rect x="436" y="273" width="1" height="1" fill="#d8d8d8"/><rect x="436" y="286" width="1" height="1" fill="#d8d8d8"/><rect x="436" y="299" width="1" height="1" fill="#d8d8d8"/><rect x="436" y="312" width="1" height="1" fill="#d8d8d8"/><rect x="436" y="325" width="1" height="1" fill="#d8d8d8"/><rect x="436" y="338" width="1" height="1" fill="#d8d8d8"/><rect x="436" y="351" width="1" height="1" fill="#d8d8d8"/><rect x="436" y="364" width="1" height="1" fill="#d8d8d8"/><rect x="436" y="377" width="1" height="1" fill="#d8d8d8"/><rect x="436" y="390" width="1" height="1" fill="#d8d8d8"/><rect x="436" y="403" width="1" height="1" fill="#d8d8d8"/><rect x="436" y="417" width="1" height="1" fill="#d8d8d8"/><rect x="436" y="430" width="1" height="1" fill="#d8d8d8"/><rect x="436" y="443" width="1" height="1" fill="#d8d8d8"/><rect x="436" y="456" width="1" height="1" fill="#d8d8d8"/><rect x="436" y="469" width="1" height="1" fill="#d8d8d8"/><rect x="436" y="482" width="1" height="1" fill="#d8d8d8"/><rect x="436" y="495" width="1" height="1" fill="#d8d8d8"/><rect x="436" y="508" width="1" height="1" fill="#d8d8d8"/><rect x="436" y="521" width="1" height="1" fill="#d8d8d8"/><rect x="436" y="534" width="1" height="1" fill="#d8d8d8"/><rect x="436" y="547" width="1" height="1" fill="#d8d8d8"/><rect x="436" y="560" width="1" height="1" fill="#d8d8d8"/><rect x="436" y="573" width="1" height="1" fill="#d8d8d8"/><rect x="436" y="586" width="1" height="1" fill="#d8d8d8"/><rect x="436" y="600" width="1" height="1" fill="#d8d8d8"/><rect x="436" y="613" width="1" height="1" fill="#d8d8d8"/><rect x="436" y="626" width="1" height="1" fill="#d8d8d8"/><rect x="436" y="639" width="1" height="1" fill="#d8d8d8"/><rect x="436" y="652" width="1" height="1" fill="#d8d8d8"/><rect x="436" y="665" width="1" height="1" fill="#d8d8d8"/><rect x="642" y="168" width="1" height="1" fill="#d8d8d8"/><rect x="642" y="181" width="1" height="1" fill="#d8d8d8"/><rect x="642" y="194" width="1" height="1" fill="#d8d8d8"/><rect x="642" y="207" width="1" height="1" fill="#d8d8d8"/><rect x="642" y="220" width="1" height="1" fill="#d8d8d8"/><rect x="642" y="234" width="1" height="1" fill="#d8d8d8"/><rect x="642" y="247" width="1" height="1" fill="#d8d8d8"/><rect x="642" y="260" width="1" height="1" fill="#d8d8d8"/><rect x="642" y="273" width="1" height="1" fill="#d8d8d8"/><rect x="642" y="286" width="1" height="1" fill="#d8d8d8"/><rect x="642" y="299" width="1" height="1" fill="#d8d8d8"/><rect x="642" y="312" width="1" height="1" fill="#d8d8d8"/><rect x="642" y="325" width="1" height="1" fill="#d8d8d8"/><rect x="642" y="338" width="1" height="1" fill="#d8d8d8"/><rect x="642" y="351" width="1" height="1" fill="#d8d8d8"/><rect x="642" y="364" width="1" height="1" fill="#d8d8d8"/><rect x="642" y="377" width="1" height="1" fill="#d8d8d8"/><rect x="642" y="390" width="1" height="1" fill="#d8d8d8"/><rect x="642" y="403" width="1" height="1" fill="#d8d8d8"/><rect x="642" y="417" width="1" height="1" fill="#d8d8d8"/><rect x="642" y="430" width="1" height="1" fill="#d8d8d8"/><rect x="642" y="443" width="1" height="1" fill="#d8d8d8"/><rect x="642" y="456" width="1" height="1" fill="#d8d8d8"/><rect x="642" y="469" width="1" height="1" fill="#d8d8d8"/><rect x="642" y="482" width="1" height="1" fill="#d8d8d8"/><rect x="642" y="495" width="1" height="1" fill="#d8d8d8"/><rect x="642" y="508" width="1" height="1" fill="#d8d8d8"/><rect x="642" y="521" width="1" height="1" fill="#d8d8d8"/><rect x="642" y="534" width="1" height="1" fill="#d8d8d8"/><rect x="642" y="547" width="1" height="1" fill="#d8d8d8"/><rect x="642" y="560" width="1" height="1" fill="#d8d8d8"/><rect x="642" y="573" width="1" height="1" fill="#d8d8d8"/><rect x="642" y="586" width="1" height="1" fill="#d8d8d8"/><rect x="642" y="600" width="1" height="1" fill="#d8d8d8"/><rect x="642" y="613" width="1" height="1" fill="#d8d8d8"/><rect x="642" y="626" width="1" height="1" fill="#d8d8d8"/><rect x="642" y="639" width="1" height="1" fill="#d8d8d8"/><rect x="642" y="652" width="1" height="1" fill="#d8d8d8"/><rect x="642" y="665" width="1" height="1" fill="#d8d8d8"/><rect x="744" y="168" width="1" height="1" fill="#d8d8d8"/><rect x="744" y="181" width="1" height="1" fill="#d8d8d8"/><rect x="744" y="194" width="1" height="1" fill="#d8d8d8"/><rect x="744" y="207" width="1" height="1" fill="#d8d8d8"/><rect x="744" y="220" width="1" height="1" fill="#d8d8d8"/><rect x="744" y="234" width="1" height="1" fill="#d8d8d8"/><rect x="744" y="247" width="1" height="1" fill="#d8d8d8"/><rect x="744" y="260" width="1" height="1" fill="#d8d8d8"/><rect x="744" y="273" width="1" height="1" fill="#d8d8d8"/><rect x="744" y="286" width="1" height="1" fill="#d8d8d8"/><rect x="744" y="299" width="1" height="1" fill="#d8d8d8"/><rect x="744" y="312" width="1" height="1" fill="#d8d8d8"/><rect x="744" y="325" width="1" height="1" fill="#d8d8d8"/><rect x="744" y="338" width="1" height="1" fill="#d8d8d8"/><rect x="744" y="351" width="1" height="1" fill="#d8d8d8"/><rect x="744" y="364" width="1" height="1" fill="#d8d8d8"/><rect x="744" y="377" width="1" height="1" fill="#d8d8d8"/><rect x="744" y="390" width="1" height="1" fill="#d8d8d8"/><rect x="744" y="403" width="1" height="1" fill="#d8d8d8"/><rect x="744" y="417" width="1" height="1" fill="#d8d8d8"/><rect x="744" y="430" width="1" height="1" fill="#d8d8d8"/><rect x="744" y="443" width="1" height="1" fill="#d8d8d8"/><rect x="744" y="456" width="1" height="1" fill="#d8d8d8"/><rect x="744" y="469" width="1" height="1" fill="#d8d8d8"/><rect x="744" y="482" width="1" height="1" fill="#d8d8d8"/><rect x="744" y="495" width="1" height="1" fill="#d8d8d8"/><rect x="744" y="508" width="1" height="1" fill="#d8d8d8"/><rect x="744" y="521" width="1" height="1" fill="#d8d8d8"/><rect x="744" y="534" width="1" height="1" fill="#d8d8d8"/><rect x="744" y="547" width="1" height="1" fill="#d8d8d8"/><rect x="744" y="560" width="1" height="1" fill="#d8d8d8"/><rect x="744" y="573" width="1" height="1" fill="#d8d8d8"/><rect x="744" y="586" width="1" height="1" fill="#d8d8d8"/><rect x="744" y="600" width="1" height="1" fill="#d8d8d8"/><rect x="744" y="613" width="1" height="1" fill="#d8d8d8"/><rect x="744" y="626" width="1" height="1" fill="#d8d8d8"/><rect x="744" y="639" width="1" height="1" fill="#d8d8d8"/><rect x="744" y="652" width="1" height="1" fill="#d8d8d8"/><rect x="744" y="665" width="1" height="1" fill="#d8d8d8"/><rect x="847" y="168" width="1" height="1" fill="#d8d8d8"/><rect x="847" y="181" width="1" height="1" fill="#d8d8d8"/><rect x="847" y="194" width="1" height="1" fill="#d8d8d8"/><rect x="847" y="207" width="1" height="1" fill="#d8d8d8"/><rect x="847" y="220" width="1" height="1" fill="#d8d8d8"/><rect x="847" y="234" width="1" height="1" fill="#d8d8d8"/><rect x="847" y="247" width="1" height="1" fill="#d8d8d8"/><rect x="847" y="260" width="1" height="1" fill="#d8d8d8"/><rect x="847" y="273" width="1" height="1" fill="#d8d8d8"/><rect x="847" y="286" width="1" height="1" fill="#d8d8d8"/><rect x="847" y="299" width="1" height="1" fill="#d8d8d8"/><rect x="847" y="312" width="1" height="1" fill="#d8d8d8"/><rect x="847" y="325" width="1" height="1" fill="#d8d8d8"/><rect x="847" y="338" width="1" height="1" fill="#d8d8d8"/><rect x="847" y="351" width="1" height="1" fill="#d8d8d8"/><rect x="847" y="364" width="1" height="1" fill="#d8d8d8"/><rect x="847" y="377" width="1" height="1" fill="#d8d8d8"/><rect x="847" y="390" width="1" height="1" fill="#d8d8d8"/><rect x="847" y="403" width="1" height="1" fill="#d8d8d8"/><rect x="847" y="417" width="1" height="1" fill="#d8d8d8"/><rect x="847" y="430" width="1" height="1" fill="#d8d8d8"/><rect x="847" y="443" width="1" height="1" fill="#d8d8d8"/><rect x="847" y="456" width="1" height="1" fill="#d8d8d8"/><rect x="847" y="469" width="1" height="1" fill="#d8d8d8"/><rect x="847" y="482" width="1" height="1" fill="#d8d8d8"/><rect x="847" y="495" width="1" height="1" fill="#d8d8d8"/><rect x="847" y="508" width="1" height="1" fill="#d8d8d8"/><rect x="847" y="521" width="1" height="1" fill="#d8d8d8"/><rect x="847" y="534" width="1" height="1" fill="#d8d8d8"/><rect x="847" y="547" width="1" height="1" fill="#d8d8d8"/><rect x="847" y="560" width="1" height="1" fill="#d8d8d8"/><rect x="847" y="573" width="1" height="1" fill="#d8d8d8"/><rect x="847" y="586" width="1" height="1" fill="#d8d8d8"/><rect x="847" y="600" width="1" height="1" fill="#d8d8d8"/><rect x="847" y="613" width="1" height="1" fill="#d8d8d8"/><rect x="847" y="626" width="1" height="1" fill="#d8d8d8"/><rect x="847" y="639" width="1" height="1" fill="#d8d8d8"/><rect x="847" y="652" width="1" height="1" fill="#d8d8d8"/><rect x="847" y="665" width="1" height="1" fill="#d8d8d8"/><rect x="949" y="168" width="1" height="1" fill="#d8d8d8"/><rect x="949" y="181" width="1" height="1" fill="#d8d8d8"/><rect x="949" y="194" width="1" height="1" fill="#d8d8d8"/><rect x="949" y="207" width="1" height="1" fill="#d8d8d8"/><rect x="949" y="220" width="1" height="1" fill="#d8d8d8"/><rect x="949" y="234" width="1" height="1" fill="#d8d8d8"/><rect x="949" y="247" width="1" height="1" fill="#d8d8d8"/><rect x="949" y="260" width="1" height="1" fill="#d8d8d8"/><rect x="949" y="273" width="1" height="1" fill="#d8d8d8"/><rect x="949" y="286" width="1" height="1" fill="#d8d8d8"/><rect x="949" y="299" width="1" height="1" fill="#d8d8d8"/><rect x="949" y="312" width="1" height="1" fill="#d8d8d8"/><rect x="949" y="325" width="1" height="1" fill="#d8d8d8"/><rect x="949" y="338" width="1" height="1" fill="#d8d8d8"/><rect x="949" y="351" width="1" height="1" fill="#d8d8d8"/><rect x="949" y="364" width="1" height="1" fill="#d8d8d8"/><rect x="949" y="377" width="1" height="1" fill="#d8d8d8"/><rect x="949" y="390" width="1" height="1" fill="#d8d8d8"/><rect x="949" y="403" width="1" height="1" fill="#d8d8d8"/><rect x="949" y="417" width="1" height="1" fill="#d8d8d8"/><rect x="949" y="430" width="1" height="1" fill="#d8d8d8"/><rect x="949" y="443" width="1" height="1" fill="#d8d8d8"/><rect x="949" y="456" width="1" height="1" fill="#d8d8d8"/><rect x="949" y="469" width="1" height="1" fill="#d8d8d8"/><rect x="949" y="482" width="1" height="1" fill="#d8d8d8"/><rect x="949" y="495" width="1" height="1" fill="#d8d8d8"/><rect x="949" y="508" width="1" height="1" fill="#d8d8d8"/><rect x="949" y="521" width="1" height="1" fill="#d8d8d8"/><rect x="949" y="534" width="1" height="1" fill="#d8d8d8"/><rect x="949" y="547" width="1" height="1" fill="#d8d8d8"/><rect x="949" y="560" width="1" height="1" fill="#d8d8d8"/><rect x="949" y="573" width="1" height="1" fill="#d8d8d8"/><rect x="949" y="586" width="1" height="1" fill="#d8d8d8"/><rect x="949" y="600" width="1" height="1" fill="#d8d8d8"/><rect x="949" y="613" width="1" height="1" fill="#d8d8d8"/><rect x="949" y="626" width="1" height="1" fill="#d8d8d8"/><rect x="949" y="639" width="1" height="1" fill="#d8d8d8"/><rect x="949" y="652" width="1" height="1" fill="#d8d8d8"/><rect x="949" y="665" width="1" height="1" fill="#d8d8d8"/><rect x="47" y="220" width="1" height="1" fill="#d8d8d8"/><rect x="67" y="220" width="1" height="1" fill="#d8d8d8"/><rect x="88" y="220" width="1" height="1" fill="#d8d8d8"/><rect x="108" y="220" width="1" height="1" fill="#d8d8d8"/><rect x="129" y="220" width="1" height="1" fill="#d8d8d8"/><rect x="149" y="220" width="1" height="1" fill="#d8d8d8"/><rect x="170" y="220" width="1" height="1" fill="#d8d8d8"/><rect x="190" y="220" width="1" height="1" fill="#d8d8d8"/><rect x="211" y="220" width="1" height="1" fill="#d8d8d8"/><rect x="231" y="220" width="1" height="1" fill="#d8d8d8"/><rect x="252" y="220" width="1" height="1" fill="#d8d8d8"/><rect x="272" y="220" width="1" height="1" fill="#d8d8d8"/><rect x="293" y="220" width="1" height="1" fill="#d8d8d8"/><rect x="313" y="220" width="1" height="1" fill="#d8d8d8"/><rect x="334" y="220" width="1" height="1" fill="#d8d8d8"/><rect x="354" y="220" width="1" height="1" fill="#d8d8d8"/><rect x="375" y="220" width="1" height="1" fill="#d8d8d8"/><rect x="395" y="220" width="1" height="1" fill="#d8d8d8"/><rect x="416" y="220" width="1" height="1" fill="#d8d8d8"/><rect x="436" y="220" width="1" height="1" fill="#d8d8d8"/><rect x="457" y="220" width="1" height="1" fill="#d8d8d8"/><rect x="477" y="220" width="1" height="1" fill="#d8d8d8"/><rect x="498" y="220" width="1" height="1" fill="#d8d8d8"/><rect x="518" y="220" width="1" height="1" fill="#d8d8d8"/><rect x="539" y="220" width="1" height="1" fill="#d8d8d8"/><rect x="559" y="220" width="1" height="1" fill="#d8d8d8"/><rect x="580" y="220" width="1" height="1" fill="#d8d8d8"/><rect x="600" y="220" width="1" height="1" fill="#d8d8d8"/><rect x="621" y="220" width="1" height="1" fill="#d8d8d8"/><rect x="642" y="220" width="1" height="1" fill="#d8d8d8"/><rect x="662" y="220" width="1" height="1" fill="#d8d8d8"/><rect x="683" y="220" width="1" height="1" fill="#d8d8d8"/><rect x="703" y="220" width="1" height="1" fill="#d8d8d8"/><rect x="724" y="220" width="1" height="1" fill="#d8d8d8"/><rect x="744" y="220" width="1" height="1" fill="#d8d8d8"/><rect x="765" y="220" width="1" height="1" fill="#d8d8d8"/><rect x="785" y="220" width="1" height="1" fill="#d8d8d8"/><rect x="806" y="220" width="1" height="1" fill="#d8d8d8"/><rect x="826" y="220" width="1" height="1" fill="#d8d8d8"/><rect x="847" y="220" width="1" height="1" fill="#d8d8d8"/><rect x="867" y="220" width="1" height="1" fill="#d8d8d8"/><rect x="888" y="220" width="1" height="1" fill="#d8d8d8"/><rect x="908" y="220" width="1" height="1" fill="#d8d8d8"/><rect x="929" y="220" width="1" height="1" fill="#d8d8d8"/><rect x="949" y="220" width="1" height="1" fill="#d8d8d8"/><rect x="970" y="220" width="1" height="1" fill="#d8d8d8"/><rect x="990" y="220" width="1" height="1" fill="#d8d8d8"/><rect x="1011" y="220" width="1" height="1" fill="#d8d8d8"/><rect x="1031" y="220" width="1" height="1" fill="#d8d8d8"/><rect x="47" y="286" width="1" height="1" fill="#d8d8d8"/><rect x="67" y="286" width="1" height="1" fill="#d8d8d8"/><rect x="88" y="286" width="1" height="1" fill="#d8d8d8"/><rect x="108" y="286" width="1" height="1" fill="#d8d8d8"/><rect x="129" y="286" width="1" height="1" fill="#d8d8d8"/><rect x="149" y="286" width="1" height="1" fill="#d8d8d8"/><rect x="170" y="286" width="1" height="1" fill="#d8d8d8"/><rect x="190" y="286" width="1" height="1" fill="#d8d8d8"/><rect x="211" y="286" width="1" height="1" fill="#d8d8d8"/><rect x="231" y="286" width="1" height="1" fill="#d8d8d8"/><rect x="252" y="286" width="1" height="1" fill="#d8d8d8"/><rect x="272" y="286" width="1" height="1" fill="#d8d8d8"/><rect x="293" y="286" width="1" height="1" fill="#d8d8d8"/><rect x="313" y="286" width="1" height="1" fill="#d8d8d8"/><rect x="334" y="286" width="1" height="1" fill="#d8d8d8"/><rect x="354" y="286" width="1" height="1" fill="#d8d8d8"/><rect x="375" y="286" width="1" height="1" fill="#d8d8d8"/><rect x="395" y="286" width="1" height="1" fill="#d8d8d8"/><rect x="416" y="286" width="1" height="1" fill="#d8d8d8"/><rect x="436" y="286" width="1" height="1" fill="#d8d8d8"/><rect x="457" y="286" width="1" height="1" fill="#d8d8d8"/><rect x="477" y="286" width="1" height="1" fill="#d8d8d8"/><rect x="498" y="286" width="1" height="1" fill="#d8d8d8"/><rect x="518" y="286" width="1" height="1" fill="#d8d8d8"/><rect x="539" y="286" width="1" height="1" fill="#d8d8d8"/><rect x="559" y="286" width="1" height="1" fill="#d8d8d8"/><rect x="580" y="286" width="1" height="1" fill="#d8d8d8"/><rect x="600" y="286" width="1" height="1" fill="#d8d8d8"/><rect x="621" y="286" width="1" height="1" fill="#d8d8d8"/><rect x="642" y="286" width="1" height="1" fill="#d8d8d8"/><rect x="662" y="286" width="1" height="1" fill="#d8d8d8"/><rect x="683" y="286" width="1" height="1" fill="#d8d8d8"/><rect x="703" y="286" width="1" height="1" fill="#d8d8d8"/><rect x="724" y="286" width="1" height="1" fill="#d8d8d8"/><rect x="744" y="286" width="1" height="1" fill="#d8d8d8"/><rect x="765" y="286" width="1" height="1" fill="#d8d8d8"/><rect x="785" y="286" width="1" height="1" fill="#d8d8d8"/><rect x="806" y="286" width="1" height="1" fill="#d8d8d8"/><rect x="826" y="286" width="1" height="1" fill="#d8d8d8"/><rect x="847" y="286" width="1" height="1" fill="#d8d8d8"/><rect x="867" y="286" width="1" height="1" fill="#d8d8d8"/><rect x="888" y="286" width="1" height="1" fill="#d8d8d8"/><rect x="908" y="286" width="1" height="1" fill="#d8d8d8"/><rect x="929" y="286" width="1" height="1" fill="#d8d8d8"/><rect x="949" y="286" width="1" height="1" fill="#d8d8d8"/><rect x="970" y="286" width="1" height="1" fill="#d8d8d8"/><rect x="990" y="286" width="1" height="1" fill="#d8d8d8"/><rect x="1011" y="286" width="1" height="1" fill="#d8d8d8"/><rect x="1031" y="286" width="1" height="1" fill="#d8d8d8"/><rect x="47" y="351" width="1" height="1" fill="#d8d8d8"/><rect x="67" y="351" width="1" height="1" fill="#d8d8d8"/><rect x="88" y="351" width="1" height="1" fill="#d8d8d8"/><rect x="108" y="351" width="1" height="1" fill="#d8d8d8"/><rect x="129" y="351" width="1" height="1" fill="#d8d8d8"/><rect x="149" y="351" width="1" height="1" fill="#d8d8d8"/><rect x="170" y="351" width="1" height="1" fill="#d8d8d8"/><rect x="190" y="351" width="1" height="1" fill="#d8d8d8"/><rect x="211" y="351" width="1" height="1" fill="#d8d8d8"/><rect x="231" y="351" width="1" height="1" fill="#d8d8d8"/><rect x="252" y="351" width="1" height="1" fill="#d8d8d8"/><rect x="272" y="351" width="1" height="1" fill="#d8d8d8"/><rect x="293" y="351" width="1" height="1" fill="#d8d8d8"/><rect x="313" y="351" width="1" height="1" fill="#d8d8d8"/><rect x="334" y="351" width="1" height="1" fill="#d8d8d8"/><rect x="354" y="351" width="1" height="1" fill="#d8d8d8"/><rect x="375" y="351" width="1" height="1" fill="#d8d8d8"/><rect x="395" y="351" width="1" height="1" fill="#d8d8d8"/><rect x="416" y="351" width="1" height="1" fill="#d8d8d8"/><rect x="436" y="351" width="1" height="1" fill="#d8d8d8"/><rect x="457" y="351" width="1" height="1" fill="#d8d8d8"/><rect x="477" y="351" width="1" height="1" fill="#d8d8d8"/><rect x="498" y="351" width="1" height="1" fill="#d8d8d8"/><rect x="518" y="351" width="1" height="1" fill="#d8d8d8"/><rect x="539" y="351" width="1" height="1" fill="#d8d8d8"/><rect x="559" y="351" width="1" height="1" fill="#d8d8d8"/><rect x="580" y="351" width="1" height="1" fill="#d8d8d8"/><rect x="600" y="351" width="1" height="1" fill="#d8d8d8"/><rect x="621" y="351" width="1" height="1" fill="#d8d8d8"/><rect x="642" y="351" width="1" height="1" fill="#d8d8d8"/><rect x="662" y="351" width="1" height="1" fill="#d8d8d8"/><rect x="683" y="351" width="1" height="1" fill="#d8d8d8"/><rect x="703" y="351" width="1" height="1" fill="#d8d8d8"/><rect x="724" y="351" width="1" height="1" fill="#d8d8d8"/><rect x="744" y="351" width="1" height="1" fill="#d8d8d8"/><rect x="765" y="351" width="1" height="1" fill="#d8d8d8"/><rect x="785" y="351" width="1" height="1" fill="#d8d8d8"/><rect x="806" y="351" width="1" height="1" fill="#d8d8d8"/><rect x="826" y="351" width="1" height="1" fill="#d8d8d8"/><rect x="847" y="351" width="1" height="1" fill="#d8d8d8"/><rect x="867" y="351" width="1" height="1" fill="#d8d8d8"/><rect x="888" y="351" width="1" height="1" fill="#d8d8d8"/><rect x="908" y="351" width="1" height="1" fill="#d8d8d8"/><rect x="929" y="351" width="1" height="1" fill="#d8d8d8"/><rect x="949" y="351" width="1" height="1" fill="#d8d8d8"/><rect x="970" y="351" width="1" height="1" fill="#d8d8d8"/><rect x="990" y="351" width="1" height="1" fill="#d8d8d8"/><rect x="1011" y="351" width="1" height="1" fill="#d8d8d8"/><rect x="1031" y="351" width="1" height="1" fill="#d8d8d8"/><rect x="47" y="482" width="1" height="1" fill="#d8d8d8"/><rect x="67" y="482" width="1" height="1" fill="#d8d8d8"/><rect x="88" y="482" width="1" height="1" fill="#d8d8d8"/><rect x="108" y="482" width="1" height="1" fill="#d8d8d8"/><rect x="129" y="482" width="1" height="1" fill="#d8d8d8"/><rect x="149" y="482" width="1" height="1" fill="#d8d8d8"/><rect x="170" y="482" width="1" height="1" fill="#d8d8d8"/><rect x="190" y="482" width="1" height="1" fill="#d8d8d8"/><rect x="211" y="482" width="1" height="1" fill="#d8d8d8"/><rect x="231" y="482" width="1" height="1" fill="#d8d8d8"/><rect x="252" y="482" width="1" height="1" fill="#d8d8d8"/><rect x="272" y="482" width="1" height="1" fill="#d8d8d8"/><rect x="293" y="482" width="1" height="1" fill="#d8d8d8"/><rect x="313" y="482" width="1" height="1" fill="#d8d8d8"/><rect x="334" y="482" width="1" height="1" fill="#d8d8d8"/><rect x="354" y="482" width="1" height="1" fill="#d8d8d8"/><rect x="375" y="482" width="1" height="1" fill="#d8d8d8"/><rect x="395" y="482" width="1" height="1" fill="#d8d8d8"/><rect x="416" y="482" width="1" height="1" fill="#d8d8d8"/><rect x="436" y="482" width="1" height="1" fill="#d8d8d8"/><rect x="457" y="482" width="1" height="1" fill="#d8d8d8"/><rect x="477" y="482" width="1" height="1" fill="#d8d8d8"/><rect x="498" y="482" width="1" height="1" fill="#d8d8d8"/><rect x="518" y="482" width="1" height="1" fill="#d8d8d8"/><rect x="539" y="482" width="1" height="1" fill="#d8d8d8"/><rect x="559" y="482" width="1" height="1" fill="#d8d8d8"/><rect x="580" y="482" width="1" height="1" fill="#d8d8d8"/><rect x="600" y="482" width="1" height="1" fill="#d8d8d8"/><rect x="621" y="482" width="1" height="1" fill="#d8d8d8"/><rect x="642" y="482" width="1" height="1" fill="#d8d8d8"/><rect x="662" y="482" width="1" height="1" fill="#d8d8d8"/><rect x="683" y="482" width="1" height="1" fill="#d8d8d8"/><rect x="703" y="482" width="1" height="1" fill="#d8d8d8"/><rect x="724" y="482" width="1" height="1" fill="#d8d8d8"/><rect x="744" y="482" width="1" height="1" fill="#d8d8d8"/><rect x="765" y="482" width="1" height="1" fill="#d8d8d8"/><rect x="785" y="482" width="1" height="1" fill="#d8d8d8"/><rect x="806" y="482" width="1" height="1" fill="#d8d8d8"/><rect x="826" y="482" width="1" height="1" fill="#d8d8d8"/><rect x="847" y="482" width="1" height="1" fill="#d8d8d8"/><rect x="867" y="482" width="1" height="1" fill="#d8d8d8"/><rect x="888" y="482" width="1" height="1" fill="#d8d8d8"/><rect x="908" y="482" width="1" height="1" fill="#d8d8d8"/><rect x="929" y="482" width="1" height="1" fill="#d8d8d8"/><rect x="949" y="482" width="1" height="1" fill="#d8d8d8"/><rect x="970" y="482" width="1" height="1" fill="#d8d8d8"/><rect x="990" y="482" width="1" height="1" fill="#d8d8d8"/><rect x="1011" y="482" width="1" height="1" fill="#d8d8d8"/><rect x="1031" y="482" width="1" height="1" fill="#d8d8d8"/><rect x="47" y="547" width="1" height="1" fill="#d8d8d8"/><rect x="67" y="547" width="1" height="1" fill="#d8d8d8"/><rect x="88" y="547" width="1" height="1" fill="#d8d8d8"/><rect x="108" y="547" width="1" height="1" fill="#d8d8d8"/><rect x="129" y="547" width="1" height="1" fill="#d8d8d8"/><rect x="149" y="547" width="1" height="1" fill="#d8d8d8"/><rect x="170" y="547" width="1" height="1" fill="#d8d8d8"/><rect x="190" y="547" width="1" height="1" fill="#d8d8d8"/><rect x="211" y="547" width="1" height="1" fill="#d8d8d8"/><rect x="231" y="547" width="1" height="1" fill="#d8d8d8"/><rect x="252" y="547" width="1" height="1" fill="#d8d8d8"/><rect x="272" y="547" width="1" height="1" fill="#d8d8d8"/><rect x="293" y="547" width="1" height="1" fill="#d8d8d8"/><rect x="313" y="547" width="1" height="1" fill="#d8d8d8"/><rect x="334" y="547" width="1" height="1" fill="#d8d8d8"/><rect x="354" y="547" width="1" height="1" fill="#d8d8d8"/><rect x="375" y="547" width="1" height="1" fill="#d8d8d8"/><rect x="395" y="547" width="1" height="1" fill="#d8d8d8"/><rect x="416" y="547" width="1" height="1" fill="#d8d8d8"/><rect x="436" y="547" width="1" height="1" fill="#d8d8d8"/><rect x="457" y="547" width="1" height="1" fill="#d8d8d8"/><rect x="477" y="547" width="1" height="1" fill="#d8d8d8"/><rect x="498" y="547" width="1" height="1" fill="#d8d8d8"/><rect x="518" y="547" width="1" height="1" fill="#d8d8d8"/><rect x="539" y="547" width="1" height="1" fill="#d8d8d8"/><rect x="559" y="547" width="1" height="1" fill="#d8d8d8"/><rect x="580" y="547" width="1" height="1" fill="#d8d8d8"/><rect x="600" y="547" width="1" height="1" fill="#d8d8d8"/><rect x="621" y="547" width="1" height="1" fill="#d8d8d8"/><rect x="642" y="547" width="1" height="1" fill="#d8d8d8"/><rect x="662" y="547" width="1" height="1" fill="#d8d8d8"/><rect x="683" y="547" width="1" height="1" fill="#d8d8d8"/><rect x="703" y="547" width="1" height="1" fill="#d8d8d8"/><rect x="724" y="547" width="1" height="1" fill="#d8d8d8"/><rect x="744" y="547" width="1" height="1" fill="#d8d8d8"/><rect x="765" y="547" width="1" height="1" fill="#d8d8d8"/><rect x="785" y="547" width="1" height="1" fill="#d8d8d8"/><rect x="806" y="547" width="1" height="1" fill="#d8d8d8"/><rect x="826" y="547" width="1" height="1" fill="#d8d8d8"/><rect x="847" y="547" width="1" height="1" fill="#d8d8d8"/><rect x="867" y="547" width="1" height="1" fill="#d8d8d8"/><rect x="888" y="547" width="1" height="1" fill="#d8d8d8"/><rect x="908" y="547" width="1" height="1" fill="#d8d8d8"/><rect x="929" y="547" width="1" height="1" fill="#d8d8d8"/><rect x="949" y="547" width="1" height="1" fill="#d8d8d8"/><rect x="970" y="547" width="1" height="1" fill="#d8d8d8"/><rect x="990" y="547" width="1" height="1" fill="#d8d8d8"/><rect x="1011" y="547" width="1" height="1" fill="#d8d8d8"/><rect x="1031" y="547" width="1" height="1" fill="#d8d8d8"/><rect x="47" y="613" width="1" height="1" fill="#d8d8d8"/><rect x="67" y="613" width="1" height="1" fill="#d8d8d8"/><rect x="88" y="613" width="1" height="1" fill="#d8d8d8"/><rect x="108" y="613" width="1" height="1" fill="#d8d8d8"/><rect x="129" y="613" width="1" height="1" fill="#d8d8d8"/><rect x="149" y="613" width="1" height="1" fill="#d8d8d8"/><rect x="170" y="613" width="1" height="1" fill="#d8d8d8"/><rect x="190" y="613" width="1" height="1" fill="#d8d8d8"/><rect x="211" y="613" width="1" height="1" fill="#d8d8d8"/><rect x="231" y="613" width="1" height="1" fill="#d8d8d8"/><rect x="252" y="613" width="1" height="1" fill="#d8d8d8"/><rect x="272" y="613" width="1" height="1" fill="#d8d8d8"/><rect x="293" y="613" width="1" height="1" fill="#d8d8d8"/><rect x="313" y="613" width="1" height="1" fill="#d8d8d8"/><rect x="334" y="613" width="1" height="1" fill="#d8d8d8"/><rect x="354" y="613" width="1" height="1" fill="#d8d8d8"/><rect x="375" y="613" width="1" height="1" fill="#d8d8d8"/><rect x="395" y="613" width="1" height="1" fill="#d8d8d8"/><rect x="416" y="613" width="1" height="1" fill="#d8d8d8"/><rect x="436" y="613" width="1" height="1" fill="#d8d8d8"/><rect x="457" y="613" width="1" height="1" fill="#d8d8d8"/><rect x="477" y="613" width="1" height="1" fill="#d8d8d8"/><rect x="498" y="613" width="1" height="1" fill="#d8d8d8"/><rect x="518" y="613" width="1" height="1" fill="#d8d8d8"/><rect x="539" y="613" width="1" height="1" fill="#d8d8d8"/><rect x="559" y="613" width="1" height="1" fill="#d8d8d8"/><rect x="580" y="613" width="1" height="1" fill="#d8d8d8"/><rect x="600" y="613" width="1" height="1" fill="#d8d8d8"/><rect x="621" y="613" width="1" height="1" fill="#d8d8d8"/><rect x="642" y="613" width="1" height="1" fill="#d8d8d8"/><rect x="662" y="613" width="1" height="1" fill="#d8d8d8"/><rect x="683" y="613" width="1" height="1" fill="#d8d8d8"/><rect x="703" y="613" width="1" height="1" fill="#d8d8d8"/><rect x="724" y="613" width="1" height="1" fill="#d8d8d8"/><rect x="744" y="613" width="1" height="1" fill="#d8d8d8"/><rect x="765" y="613" width="1" height="1" fill="#d8d8d8"/><rect x="785" y="613" width="1" height="1" fill="#d8d8d8"/><rect x="806" y="613" width="1" height="1" fill="#d8d8d8"/><rect x="826" y="613" width="1" height="1" fill="#d8d8d8"/><rect x="847" y="613" width="1" height="1" fill="#d8d8d8"/><rect x="867" y="613" width="1" height="1" fill="#d8d8d8"/><rect x="888" y="613" width="1" height="1" fill="#d8d8d8"/><rect x="908" y="613" width="1" height="1" fill="#d8d8d8"/><rect x="929" y="613" width="1" height="1" fill="#d8d8d8"/><rect x="949" y="613" width="1" height="1" fill="#d8d8d8"/><rect x="970" y="613" width="1" height="1" fill="#d8d8d8"/><rect x="990" y="613" width="1" height="1" fill="#d8d8d8"/><rect x="1011" y="613" width="1" height="1" fill="#d8d8d8"/><rect x="1031" y="613" width="1" height="1" fill="#d8d8d8"/><rect x="47" y="157" width="1" height="1" fill="#d8d8d8"/><rect x="47" y="674" width="1" height="1" fill="#d8d8d8"/><rect x="67" y="157" width="1" height="1" fill="#d8d8d8"/><rect x="67" y="674" width="1" height="1" fill="#d8d8d8"/><rect x="88" y="157" width="1" height="1" fill="#d8d8d8"/><rect x="88" y="674" width="1" height="1" fill="#d8d8d8"/><rect x="108" y="157" width="1" height="1" fill="#d8d8d8"/><rect x="108" y="674" width="1" height="1" fill="#d8d8d8"/><rect x="129" y="157" width="1" height="3" fill="#d8d8d8"/><rect x="129" y="672" width="1" height="3" fill="#d8d8d8"/><rect x="149" y="157" width="1" height="1" fill="#d8d8d8"/><rect x="149" y="674" width="1" height="1" fill="#d8d8d8"/><rect x="170" y="157" width="1" height="1" fill="#d8d8d8"/><rect x="170" y="674" width="1" height="1" fill="#d8d8d8"/><rect x="190" y="157" width="1" height="1" fill="#d8d8d8"/><rect x="190" y="674" width="1" height="1" fill="#d8d8d8"/><rect x="211" y="157" width="1" height="1" fill="#d8d8d8"/><rect x="211" y="674" width="1" height="1" fill="#d8d8d8"/><rect x="231" y="157" width="1" height="3" fill="#d8d8d8"/><rect x="231" y="672" width="1" height="3" fill="#d8d8d8"/><rect x="252" y="157" width="1" height="1" fill="#d8d8d8"/><rect x="252" y="674" width="1" height="1" fill="#d8d8d8"/><rect x="272" y="157" width="1" height="1" fill="#d8d8d8"/><rect x="272" y="674" width="1" height="1" fill="#d8d8d8"/><rect x="293" y="157" width="1" height="1" fill="#d8d8d8"/><rect x="293" y="674" width="1" height="1" fill="#d8d8d8"/><rect x="313" y="157" width="1" height="1" fill="#d8d8d8"/><rect x="313" y="674" width="1" height="1" fill="#d8d8d8"/><rect x="334" y="157" width="1" height="3" fill="#d8d8d8"/><rect x="334" y="672" width="1" height="3" fill="#d8d8d8"/><rect x="354" y="157" width="1" height="1" fill="#d8d8d8"/><rect x="354" y="674" width="1" height="1" fill="#d8d8d8"/><rect x="375" y="157" width="1" height="1" fill="#d8d8d8"/><rect x="375" y="674" width="1" height="1" fill="#d8d8d8"/><rect x="395" y="157" width="1" height="1" fill="#d8d8d8"/><rect x="395" y="674" width="1" height="1" fill="#d8d8d8"/><rect x="416" y="157" width="1" height="1" fill="#d8d8d8"/><rect x="416" y="674" width="1" height="1" fill="#d8d8d8"/><rect x="436" y="157" width="1" height="3" fill="#d8d8d8"/><rect x="436" y="672" width="1" height="3" fill="#d8d8d8"/><rect x="457" y="157" width="1" height="1" fill="#d8d8d8"/><rect x="457" y="674" width="1" height="1" fill="#d8d8d8"/><rect x="477" y="157" width="1" height="1" fill="#d8d8d8"/><rect x="477" y="674" width="1" height="1" fill="#d8d8d8"/><rect x="498" y="157" width="1" height="1" fill="#d8d8d8"/><rect x="498" y="674" width="1" height="1" fill="#d8d8d8"/><rect x="518" y="157" width="1" height="1" fill="#d8d8d8"/><rect x="518" y="674" width="1" height="1" fill="#d8d8d8"/><rect x="539" y="157" width="1" height="3" fill="#d8d8d8"/><rect x="539" y="672" width="1" height="3" fill="#d8d8d8"/><rect x="559" y="157" width="1" height="1" fill="#d8d8d8"/><rect x="559" y="674" width="1" height="1" fill="#d8d8d8"/><rect x="580" y="157" width="1" height="1" fill="#d8d8d8"/><rect x="580" y="674" width="1" height="1" fill="#d8d8d8"/><rect x="600" y="157" width="1" height="1" fill="#d8d8d8"/><rect x="600" y="674" width="1" height="1" fill="#d8d8d8"/><rect x="621" y="157" width="1" height="1" fill="#d8d8d8"/><rect x="621" y="674" width="1" height="1" fill="#d8d8d8"/><rect x="642" y="157" width="1" height="3" fill="#d8d8d8"/><rect x="642" y="672" width="1" height="3" fill="#d8d8d8"/><rect x="662" y="157" width="1" height="1" fill="#d8d8d8"/><rect x="662" y="674" width="1" height="1" fill="#d8d8d8"/><rect x="683" y="157" width="1" height="1" fill="#d8d8d8"/><rect x="683" y="674" width="1" height="1" fill="#d8d8d8"/><rect x="703" y="157" width="1" height="1" fill="#d8d8d8"/><rect x="703" y="674" width="1" height="1" fill="#d8d8d8"/><rect x="724" y="157" width="1" height="1" fill="#d8d8d8"/><rect x="724" y="674" width="1" height="1" fill="#d8d8d8"/><rect x="744" y="157" width="1" height="3" fill="#d8d8d8"/><rect x="744" y="672" width="1" height="3" fill="#d8d8d8"/><rect x="765" y="157" width="1" height="1" fill="#d8d8d8"/><rect x="765" y="674" width="1" height="1" fill="#d8d8d8"/><rect x="785" y="157" width="1" height="1" fill="#d8d8d8"/><rect x="785" y="674" width="1" height="1" fill="#d8d8d8"/><rect x="806" y="157" width="1" height="1" fill="#d8d8d8"/><rect x="806" y="674" width="1" height="1" fill="#d8d8d8"/><rect x="826" y="157" width="1" height="1" fill="#d8d8d8"/><rect x="826" y="674" width="1" height="1" fill="#d8d8d8"/><rect x="847" y="157" width="1" height="3" fill="#d8d8d8"/><rect x="847" y="672" width="1" height="3" fill="#d8d8d8"/><rect x="867" y="157" width="1" height="1" fill="#d8d8d8"/><rect x="867" y="674" width="1" height="1" fill="#d8d8d8"/><rect x="888" y="157" width="1" height="1" fill="#d8d8d8"/><rect x="888" y="674" width="1" height="1" fill="#d8d8d8"/><rect x="908" y="157" width="1" height="1" fill="#d8d8d8"/><rect x="908" y="674" width="1" height="1" fill="#d8d8d8"/><rect x="929" y="157" width="1" height="1" fill="#d8d8d8"/><rect x="929" y="674" width="1" height="1" fill="#d8d8d8"/><rect x="949" y="157" width="1" height="3" fill="#d8d8d8"/><rect x="949" y="672" width="1" height="3" fill="#d8d8d8"/><rect x="970" y="157" width="1" height="1" fill="#d8d8d8"/><rect x="970" y="674" width="1" height="1" fill="#d8d8d8"/><rect x="990" y="157" width="1" height="1" fill="#d8d8d8"/><rect x="990" y="674" width="1" height="1" fill="#d8d8d8"/><rect x="1011" y="157" width="1" height="1" fill="#d8d8d8"/><rect x="1011" y="674" width="1" height="1" fill="#d8d8d8"/><rect x="1031" y="157" width="1" height="1" fill="#d8d8d8"/><rect x="1031" y="674" width="1" height="1" fill="#d8d8d8"/><rect x="28" y="168" width="1" height="1" fill="#d8d8d8"/><rect x="1050" y="168" width="1" height="1" fill="#d8d8d8"/><rect x="28" y="181" width="1" height="1" fill="#d8d8d8"/><rect x="1050" y="181" width="1" height="1" fill="#d8d8d8"/><rect x="28" y="194" width="1" height="1" fill="#d8d8d8"/><rect x="1050" y="194" width="1" height="1" fill="#d8d8d8"/><rect x="28" y="207" width="1" height="1" fill="#d8d8d8"/><rect x="1050" y="207" width="1" height="1" fill="#d8d8d8"/><rect x="28" y="220" width="3" height="1" fill="#d8d8d8"/><rect x="1048" y="220" width="3" height="1" fill="#d8d8d8"/><rect x="28" y="234" width="1" height="1" fill="#d8d8d8"/><rect x="1050" y="234" width="1" height="1" fill="#d8d8d8"/><rect x="28" y="247" width="1" height="1" fill="#d8d8d8"/><rect x="1050" y="247" width="1" height="1" fill="#d8d8d8"/><rect x="28" y="260" width="1" height="1" fill="#d8d8d8"/><rect x="1050" y="260" width="1" height="1" fill="#d8d8d8"/><rect x="28" y="273" width="1" height="1" fill="#d8d8d8"/><rect x="1050" y="273" width="1" height="1" fill="#d8d8d8"/><rect x="28" y="286" width="3" height="1" fill="#d8d8d8"/><rect x="1048" y="286" width="3" height="1" fill="#d8d8d8"/><rect x="28" y="299" width="1" height="1" fill="#d8d8d8"/><rect x="1050" y="299" width="1" height="1" fill="#d8d8d8"/><rect x="28" y="312" width="1" height="1" fill="#d8d8d8"/><rect x="1050" y="312" width="1" height="1" fill="#d8d8d8"/><rect x="28" y="325" width="1" height="1" fill="#d8d8d8"/><rect x="1050" y="325" width="1" height="1" fill="#d8d8d8"/><rect x="28" y="338" width="1" height="1" fill="#d8d8d8"/><rect x="1050" y="338" width="1" height="1" fill="#d8d8d8"/><rect x="28" y="351" width="3" height="1" fill="#d8d8d8"/><rect x="1048" y="351" width="3" height="1" fill="#d8d8d8"/><rect x="28" y="364" width="1" height="1" fill="#d8d8d8"/><rect x="1050" y="364" width="1" height="1" fill="#d8d8d8"/><rect x="28" y="377" width="1" height="1" fill="#d8d8d8"/><rect x="1050" y="377" width="1" height="1" fill="#d8d8d8"/><rect x="28" y="390" width="1" height="1" fill="#d8d8d8"/><rect x="1050" y="390" width="1" height="1" fill="#d8d8d8"/><rect x="28" y="403" width="1" height="1" fill="#d8d8d8"/><rect x="1050" y="403" width="1" height="1" fill="#d8d8d8"/><rect x="28" y="417" width="3" height="1" fill="#d8d8d8"/><rect x="1048" y="417" width="3" height="1" fill="#d8d8d8"/><rect x="28" y="430" width="1" height="1" fill="#d8d8d8"/><rect x="1050" y="430" width="1" height="1" fill="#d8d8d8"/><rect x="28" y="443" width="1" height="1" fill="#d8d8d8"/><rect x="1050" y="443" width="1" height="1" fill="#d8d8d8"/><rect x="28" y="456" width="1" height="1" fill="#d8d8d8"/><rect x="1050" y="456" width="1" height="1" fill="#d8d8d8"/><rect x="28" y="469" width="1" height="1" fill="#d8d8d8"/><rect x="1050" y="469" width="1" height="1" fill="#d8d8d8"/><rect x="28" y="482" width="3" height="1" fill="#d8d8d8"/><rect x="1048" y="482" width="3" height="1" fill="#d8d8d8"/><rect x="28" y="495" width="1" height="1" fill="#d8d8d8"/><rect x="1050" y="495" width="1" height="1" fill="#d8d8d8"/><rect x="28" y="508" width="1" height="1" fill="#d8d8d8"/><rect x="1050" y="508" width="1" height="1" fill="#d8d8d8"/><rect x="28" y="521" width="1" height="1" fill="#d8d8d8"/><rect x="1050" y="521" width="1" height="1" fill="#d8d8d8"/><rect x="28" y="534" width="1" height="1" fill="#d8d8d8"/><rect x="1050" y="534" width="1" height="1" fill="#d8d8d8"/><rect x="28" y="547" width="3" height="1" fill="#d8d8d8"/><rect x="1048" y="547" width="3" height="1" fill="#d8d8d8"/><rect x="28" y="560" width="1" height="1" fill="#d8d8d8"/><rect x="1050" y="560" width="1" height="1" fill="#d8d8d8"/><rect x="28" y="573" width="1" height="1" fill="#d8d8d8"/><rect x="1050" y="573" width="1" height="1" fill="#d8d8d8"/><rect x="28" y="586" width="1" height="1" fill="#d8d8d8"/><rect x="1050" y="586" width="1" height="1" fill="#d8d8d8"/><rect x="28" y="600" width="1" height="1" fill="#d8d8d8"/><rect x="1050" y="600" width="1" height="1" fill="#d8d8d8"/><rect x="28" y="613" width="3" height="1" fill="#d8d8d8"/><rect x="1048" y="613" width="3" height="1" fill="#d8d8d8"/><rect x="28" y="626" width="1" height="1" fill="#d8d8d8"/><rect x="1050" y="626" width="1" height="1" fill="#d8d8d8"/><rect x="28" y="639" width="1" height="1" fill="#d8d8d8"/><rect x="1050" y="639" width="1" height="1" fill="#d8d8d8"/><rect x="28" y="652" width="1" height="1" fill="#d8d8d8"/><rect x="1050" y="652" width="1" height="1" fill="#d8d8d8"/><rect x="28" y="665" width="1" height="1" fill="#d8d8d8"/><rect x="1050" y="665" width="1" height="1" fill="#d8d8d8"/><rect x="539" y="157" width="1" height="518" fill="#c8c8c8"/><rect x="28" y="417" width="1023" height="1" fill="#c8c8c8"/><rect x="536" y="168" width="7" height="1" fill="#c8c8c8"/><rect x="536" y="181" width="7" height="1" fill="#c8c8c8"/><rect x="536" y="194" width="7" height="1" fill="#c8c8c8"/><rect x="536" y="207" width="7" height="1" fill="#c8c8c8"/><rect x="536" y="220" width="7" height="1" fill="#c8c8c8"/><rect x="536" y="234" width="7" height="1" fill="#c8c8c8"/><rect x="536" y="247" width="7" height="1" fill="#c8c8c8"/><rect x="536" y="260" width="7" height="1" fill="#c8c8c8"/><rect x="536" y="273" width="7" height="1" fill="#c8c8c8"/><rect x="536" y="286" width="7" height="1" fill="#c8c8c8"/><rect x="536" y="299" width="7" height="1" fill="#c8c8c8"/><rect x="536" y="312" width="7" height="1" fill="#c8c8c8"/><rect x="536" y="325" width="7" height="1" fill="#c8c8c8"/><rect x="536" y="338" width="7" height="1" fill="#c8c8c8"/><rect x="536" y="351" width="7" height="1" fill="#c8c8c8"/><rect x="536" y="364" width="7" height="1" fill="#c8c8c8"/><rect x="536" y="377" width="7" height="1" fill="#c8c8c8"/><rect x="536" y="390" width="7" height="1" fill="#c8c8c8"/><rect x="536" y="403" width="7" height="1" fill="#c8c8c8"/><rect x="536" y="417" width="7" height="1" fill="#c8c8c8"/><rect x="536" y="430" width="7" height="1" fill="#c8c8c8"/><rect x="536" y="443" width="7" height="1" fill="#c8c8c8"/><rect x="536" y="456" width="7" height="1" fill="#c8c8c8"/><rect x="536" y="469" width="7" height="1" fill="#c8c8c8"/><rect x="536" y="482" width="7" height="1" fill="#c8c8c8"/><rect x="536" y="495" width="7" height="1" fill="#c8c8c8"/><rect x="536" y="508" width="7" height="1" fill="#c8c8c8"/><rect x="536" y="521" width="7" height="1" fill="#c8c8c8"/><rect x="536" y="534" width="7" height="1" fill="#c8c8c8"/><rect x="536" y="547" width="7" height="1" fill="#c8c8c8"/><rect x="536" y="560" width="7" height="1" fill="#c8c8c8"/><rect x="536" y="573" width="7" height="1" fill="#c8c8c8"/><rect x="536" y="586" width="7" height="1" fill="#c8c8c8"/><rect x="536" y="600" width="7" height="1" fill="#c8c8c8"/><rect x="536" y="613" width="7" height="1" fill="#c8c8c8"/><rect x="536" y="626" width="7" height="1" fill="#c8c8c8"/><rect x="536" y="639" width="7" height="1" fill="#c8c8c8"/><rect x="536" y="652" width="7" height="1" fill="#c8c8c8"/><rect x="536" y="665" width="7" height="1" fill="#c8c8c8"/><rect x="47" y="414" width="1" height="7" fill="#c8c8c8"/><rect x="67" y="414" width="1" height="7" fill="#c8c8c8"/><rect x="88" y="414" width="1" height="7" fill="#c8c8c8"/><rect x="108" y="414" width="1" height="7" fill="#c8c8c8"/><rect x="129" y="414" width="1" height="7" fill="#c8c8c8"/><rect x="149" y="414" width="1" height="7" fill="#c8c8c8"/><rect x="170" y="414" width="1" height="7" fill="#c8c8c8"/><rect x="190" y="414" width="1" height="7" fill="#c8c8c8"/><rect x="211" y="414" width="1" height="7" fill="#c8c8c8"/><rect x="231" y="414" width="1" height="7" fill="#c8c8c8"/><rect x="252" y="414" width="1" height="7" fill="#c8c8c8"/><rect x="272" y="414" width="1" height="7" fill="#c8c8c8"/><rect x="293" y="414" width="1" height="7" fill="#c8c8c8"/><rect x="313" y="414" width="1" height="7" fill="#c8c8c8"/><rect x="334" y="414" width="1" height="7" fill="#c8c8c8"/><rect x="354" y="414" width="1" height="7" fill="#c8c8c8"/><rect x="375" y="414" width="1" height="7" fill="#c8c8c8"/><rect x="395" y="414" width="1" height="7" fill="#c8c8c8"/><rect x="416" y="414" width="1" height="7" fill="#c8c8c8"/><rect x="436" y="414" width="1" height="7" fill="#c8c8c8"/><rect x="457" y="414" width="1" height="7" fill="#c8c8c8"/><rect x="477" y="414" width="1" height="7" fill="#c8c8c8"/><rect x="498" y="414" width="1" height="7" fill="#c8c8c8"/><rect x="518" y="414" width="1" height="7" fill="#c8c8c8"/><rect x="539" y="414" width="1" height="7" fill="#c8c8c8"/><rect x="559" y="414" width="1" height="7" fill="#c8c8c8"/><rect x="580" y="414" width="1" height="7" fill="#c8c8c8"/><rect x="600" y="414" width="1" height="7" fill="#c8c8c8"/><rect x="621" y="414" width="1" height="7" fill="#c8c8c8"/><rect x="642" y="414" width="1" height="7" fill="#c8c8c8"/><rect x="662" y="414" width="1" height="7" fill="#c8c8c8"/><rect x="683" y="414" width="1" height="7" fill="#c8c8c8"/><rect x="703" y="414" width="1" height="7" fill="#c8c8c8"/><rect x="724" y="414" width="1" height="7" fill="#c8c8c8"/><rect x="744" y="414" width="1" height="7" fill="#c8c8c8"/><rect x="765" y="414" width="1" height="7" fill="#c8c8c8"/><rect x="785" y="414" width="1" height="7" fill="#c8c8c8"/><rect x="806" y="414" width="1" height="7" fill="#c8c8c8"/><rect x="826" y="414" width="1" height="7" fill="#c8c8c8"/><rect x="847" y="414" width="1" height="7" fill="#c8c8c8"/><rect x="867" y="414" width="1" height="7" fill="#c8c8c8"/><rect x="888" y="414" width="1" height="7" fill="#c8c8c8"/><rect x="908" y="414" width="1" height="7" fill="#c8c8c8"/><rect x="929" y="414" width="1" height="7" fill="#c8c8c8"/><rect x="949" y="414" width="1" height="7" fill="#c8c8c8"/><rect x="970" y="414" width="1" height="7" fill="#c8c8c8"/><rect x="990" y="414" width="1" height="7" fill="#c8c8c8"/><rect x="1011" y="414" width="1" height="7" fill="#c8c8c8"/><rect x="1031" y="414" width="1" height="7" fill="#c8c8c8"/><path d="M28 414h6v3h-6zM37 414h6v3h-6zM45 414h8v3h-8zM56 414h3v3h-3zM60 414h8v3h-8zM70 414h2v3h-2zM73 414h6v3h-6zM81 414h2v3h-2zM84 414h8v3h-8zM96 414h1v3h-1zM100 414h5v3h-5zM107 414h2v3h-2zM112 414h1v3h-1zM116 414h2v3h-2zM119 414h1v3h-1zM121 414h3v3h-3zM127 414h1v3h-1zM130 414h4v3h-4zM136 414h3v3h-3zM142 414h3v3h-3zM149 414h3v3h-3zM154 414h1v3h-1zM159 414h2v3h-2zM163 414h3v3h-3zM168 414h8v3h-8zM177 414h3v3h-3zM182 414h3v3h-3zM188 414h3v3h-3zM192 414h2v3h-2zM197 414h2v3h-2zM201 414h2v3h-2zM205 414h5v3h-5zM211 414h1v3h-1zM216 414h1v3h-1zM218 414h3v3h-3zM222 414h6v3h-6zM230 414h1v3h-1zM234 414h2v3h-2zM239 414h3v3h-3zM252 414h3v3h-3zM277 414h2v3h-2zM287 414h2v3h-2zM299 414h5v3h-5zM318 414h2v3h-2zM324 414h2v3h-2zM327 414h1v3h-1zM350 414h4v3h-4zM357 414h1v3h-1zM373 414h6v3h-6zM387 414h2v3h-2zM394 414h1v3h-1zM400 414h3v3h-3zM408 414h1v3h-1zM418 414h2v3h-2zM424 414h3v3h-3zM449 414h3v3h-3zM457 414h3v3h-3zM464 414h1v3h-1zM471 414h2v3h-2zM474 414h2v3h-2zM486 414h5v3h-5zM496 414h1v3h-1zM500 414h2v3h-2zM523 414h3v3h-3zM529 414h2v3h-2zM545 414h3v3h-3zM560 414h1v3h-1zM570 414h4v3h-4zM590 414h2v3h-2zM595 414h5v3h-5zM621 414h2v3h-2zM629 414h2v3h-2zM644 414h2v3h-2zM648 414h1v3h-1zM660 414h2v3h-2zM670 414h3v3h-3zM691 414h8v3h-8zM720 414h3v3h-3zM730 414h1v3h-1zM742 414h1v3h-1zM744 414h2v3h-2zM747 414h1v3h-1zM761 414h1v3h-1zM767 414h5v3h-5zM794 414h3v3h-3zM818 414h4v3h-4zM843 414h8v3h-8zM852 414h2v3h-2zM855 414h3v3h-3zM860 414h8v3h-8zM872 414h2v3h-2zM876 414h3v3h-3zM880 414h1v3h-1zM882 414h3v3h-3zM887 414h6v3h-6zM894 414h1v3h-1zM896 414h2v3h-2zM900 414h4v3h-4zM907 414h2v3h-2zM910 414h4v3h-4zM915 414h6v3h-6zM923 414h8v3h-8zM934 414h2v3h-2zM939 414h1v3h-1zM941 414h6v3h-6zM949 414h3v3h-3zM953 414h1v3h-1zM957 414h2v3h-2zM961 414h2v3h-2zM967 414h3v3h-3zM972 414h2v3h-2zM975 414h2v3h-2zM979 414h8v3h-8zM989 414h1v3h-1zM994 414h2v3h-2zM998 414h4v3h-4zM1003 414h6v3h-6zM1010 414h5v3h-5zM1016 414h6v3h-6zM1025 414h1v3h-1zM1029 414h5v3h-5zM1036 414h1v3h-1zM1040 414h2v3h-2zM1043 414h2v3h-2zM1049 414h2v3h-2z" fill="#e2e200"/><path d="M28,417.5 H231.5 V320.5 H232.5 V312.5 H233.5 V417.5 H242.5 V324.5 H243.5 V312.5 H251.5 V417.5 H256.5 V353.5 H257.5 V312.5 H276.5 V417.5 H281.5 V324.5 H282.5 V312.5 H286.5 V417.5 H289.5 V331.5 H290.5 V312.5 H298.5 V417.5 H305.5 V317.5 H306.5 V312.5 H317.5 V417.5 H320.5 V320.5 H321.5 V312.5 H323.5 V417.5 H329.5 V341.5 H330.5 V312.5 H349.5 V417.5 H354.5 V320.5 H355.5 V312.5 H356.5 V417.5 H358.5 V326.5 H359.5 V312.5 H372.5 V417.5 H379.5 V314.5 H380.5 V312.5 H386.5 V417.5 H389.5 V318.5 H390.5 V312.5 H393.5 V417.5 H395.5 V318.5 H396.5 V312.5 H399.5 V417.5 H403.5 V333.5 H404.5 V312.5 H407.5 V417.5 H409.5 V331.5 H410.5 V312.5 H417.5 V417.5 H420.5 V316.5 H421.5 V312.5 H423.5 V417.5 H428.5 V316.5 H429.5 V312.5 H448.5 V417.5 H452.5 V343.5 H453.5 V312.5 H456.5 V417.5 H461.5 V313.5 H462.5 V312.5 H463.5 V417.5 H465.5 V316.5 H466.5 V312.5 H470.5 V417.5 H477.5 V320.5 H478.5 V312.5 H485.5 V417.5 H491.5 V339.5 H492.5 V312.5 H495.5 V417.5 H502.5 V316.5 H503.5 V312.5 H522.5 V417.5 H526.5 V336.5 H527.5 V312.5 H528.5 V417.5 H531.5 V333.5 H532.5 V312.5 H544.5 V417.5 H551.5 V318.5 H552.5 V312.5 H559.5 V417.5 H561.5 V324.5 H562.5 V312.5 H569.5 V417.5 H576.5 V314.5 H577.5 V312.5 H589.5 V417.5 H592.5 V320.5 H593.5 V312.5 H594.5 V417.5 H600.5 V326.5 H601.5 V312.5 H620.5 V417.5 H625.5 V316.5 H626.5 V312.5 H628.5 V417.5 H631.5 V320.5 H632.5 V312.5 H643.5 V417.5 H649.5 V335.5 H650.5 V312.5 H659.5 V417.5 H662.5 V316.5 H663.5 V312.5 H669.5 V417.5 H674.5 V318.5 H675.5 V312.5 H690.5 V417.5 H699.5 V316.5 H700.5 V312.5 H719.5 V417.5 H723.5 V329.5 H724.5 V312.5 H729.5 V417.5 H731.5 V343.5 H732.5 V312.5 H741.5 V417.5 H748.5 V316.5 H749.5 V312.5 H760.5 V417.5 H762.5 V326.5 H763.5 V312.5 H766.5 V417.5 H773.5 V337.5 H774.5 V312.5 H793.5 V417.5 H797.5 V324.5 H798.5 V312.5 H817.5 V417.5 H822.5 V316.5 H823.5 V312.5 H842.5 V417.5 H1051" fill="none" stroke="#ffff00" stroke-width="1"/></svg>
<svg class="a" style="left:0;top:0" width="1345" height="728">
<path d="M6.5,411.5 H18.5 L24.5,417.5 L18.5,423.5 H6.5 Z" fill="#ffff00" stroke="#1a1a2a" stroke-width="1"/>
<path d="M13,414.5 L14.5,413 V421 M14.5,413 V421" stroke="#000" stroke-width="1.3" fill="none"/>
<path d="M1072,359.5 H1060.5 L1054.5,365.5 L1060.5,371.5 H1072" fill="#ffff00" stroke="#1a1a2a" stroke-width="1"/>
<path d="M971,130.5 H975.5 V114.5 H981" fill="none" stroke="#f0f000" stroke-width="1.2"/>
<path d="M972.5,124.5 L975.5,120.5 L978.5,124.5 Z" fill="#f0f000"/>
<path d="M55.5,692 C56.5,685.5 59,685.5 60,690 C61,694.5 63.5,694.5 64.5,688" fill="none" stroke="#f0f000" stroke-width="1.1"/>
<rect x="539" y="691" width="1" height="1" fill="#d0d0d0"/>
</svg>
<div class="a" style="left:1062px;top:360px;font-size:11.5px;color:#1a2a10">T</div>


<div id="cp" class="a">
  <div class="a" style="left:0;top:0;width:5px;height:626px;background:linear-gradient(90deg,#a8a8a8 0,#a8a8a8 1px,#f4f6fb 1px)"></div>
  <div class="a" style="left:5px;top:0;width:262px;height:20px;background:linear-gradient(#c6d5e6,#dce7f3)"></div>
  <div class="a" style="left:0;top:624px;width:267px;height:2px;background:linear-gradient(#8c8e94 50%,#c8c8cc 50%)"></div>
  <div class="a" style="left:10px;top:4px;font-size:11.5px;color:#4c5a6a">Control Panel</div>
  <div class="a" style="left:258px;top:7px;width:5px;height:5px;border:1px solid #000;border-right-width:2px"></div>
  <div class="a" style="left:257px;top:11px;width:8px;height:1px;background:#000"></div>
  <div class="a" style="left:260px;top:12px;width:1px;height:3px;background:#000"></div>
  <div class="a" style="left:5px;top:20px;width:262px;height:23px;border:1px solid #707070;border-right:none;border-radius:3px 0 0 3px;background:linear-gradient(#f2f2f2 0%,#ebebeb 45%,#dcdcdc 50%,#d0d0d0 100%)"></div>
  <div class="a" style="left:9px;top:25px;font-size:12px;color:#000">Scope</div>
  <div class="a" style="left:5px;top:43px;width:262px;height:24px;background:linear-gradient(#f5f7fc 0%,#eef0f7 35%,#cdd0e0 75%,#b6b9cf 100%)"></div>
  <div class="grp" style="left:11px;top:84px;width:202px;height:283px"></div>
  <div class="a" style="left:89px;top:76px;width:40px;height:14px;background:#f0f0f0"></div>
  <div class="lbl" style="left:94px;top:77px">Vertical</div>
  <div class="chk" style="left:19px;top:100px;border-color:#8e8f8f;background:#fff"></div>
  <svg class="a" style="left:19px;top:100px" width="13" height="13"><rect x="2" y="2" width="9" height="9" fill="#e2e4ea"/><path d="M3.2,6.8 L5.8,10.3 L10,3" fill="none" stroke="#3f5a9c" stroke-width="2"/></svg>
  <div class="lbl" style="left:35px;top:101px;letter-spacing:-0.6px">CH1</div>
  <div class="cb" style="left:19px;top:121px;width:74px">2.00V</div>
  <div class="cb" style="left:19px;top:156px;width:74px">DC</div>
  <div class="cb" style="left:19px;top:191px;width:74px">x1</div>
  <div class="chk" style="left:130px;top:198px"></div>
  <div class="lbl" style="left:146px;top:199px">Invert</div>
  <div class="chk" style="left:19px;top:240px"></div>
  <div class="lbl" style="left:35px;top:241px;letter-spacing:-0.6px">CH2</div>
  <div class="cb dis" style="left:19px;top:261px;width:74px">1.00V</div>
  <div class="cb dis" style="left:19px;top:296px;width:74px">DC</div>
  <div class="cb dis" style="left:19px;top:331px;width:74px">x1</div>
  <div class="chk" style="left:130px;top:338px;border-color:#b8b8b8;background:#f4f4f4"></div>
  <div class="lbl" style="left:146px;top:339px;color:#8d8d8d">Invert</div>
  <svg class="a" style="left:0;top:0" width="267" height="626"><path d="M153.5999999999999,146 L127.65,171.17 A36.7,35.6 0 1 1 179.55,171.17 Z" fill="#fff"/><path d="M126.94,171.88 A37.7,36.6 0 1 1 180.26,171.88" fill="none" stroke="#fff" stroke-width="1"/><path d="M127.65,171.17 A36.7,35.6 0 1 1 179.55,171.17" fill="none" stroke="#000" stroke-width="1.1"/><ellipse cx="153.5999999999999" cy="146" rx="33.7" ry="32.6" fill="#d6d6d6" stroke="#000" stroke-width="1.1"/><path d="M153.5999999999999,146 L177.41,123.77 A33.1,32.0 0 0 1 129.79,168.23 Z" fill="#b2b2b2"/><ellipse cx="153.5999999999999" cy="146" rx="27.5" ry="26.5" fill="#ffff00" stroke="#000" stroke-width="1.1"/><path d="M122.09999999999991,177 L130.0999999999999,171 M177.39999999999992,171 L184.99999999999991,177" stroke="#000" stroke-width="1.6"/><path d="M130,147 H147" stroke="#e4e4d0" stroke-width="2"/><path d="M153.5999999999999,288 L127.65,313.17 A36.7,35.6 0 1 1 179.55,313.17 Z" fill="#fff"/><path d="M126.94,313.88 A37.7,36.6 0 1 1 180.26,313.88" fill="none" stroke="#fff" stroke-width="1"/><path d="M127.65,313.17 A36.7,35.6 0 1 1 179.55,313.17" fill="none" stroke="#000" stroke-width="1.1"/><ellipse cx="153.5999999999999" cy="288" rx="33.7" ry="32.6" fill="#d6d6d6" stroke="#000" stroke-width="1.1"/><path d="M153.5999999999999,288 L177.41,265.77 A33.1,32.0 0 0 1 129.79,310.23 Z" fill="#b2b2b2"/><ellipse cx="153.5999999999999" cy="288" rx="27.5" ry="26.5" fill="#a0a0a0" stroke="#000" stroke-width="1.1"/><path d="M122.09999999999991,319 L130.0999999999999,313 M177.39999999999992,313 L184.99999999999991,319" stroke="#000" stroke-width="1.6"/><path d="M134,274.5 L148.5,284.5" stroke="#f0f0c0" stroke-width="2"/></svg>
  <div class="grp" style="left:11px;top:387px;width:202px;height:160px"></div>
  <div class="a" style="left:91px;top:379px;width:40px;height:14px;background:#f0f0f0"></div>
  <div class="lbl" style="left:95px;top:380px">Trigger</div>
  <div class="lbl" style="left:23px;top:412px">Trigger Mode</div>
  <div class="lbl" style="left:23px;top:447px">Trigger Sweep</div>
  <div class="lbl" style="left:23px;top:482px">Trigger Source</div>
  <div class="lbl" style="left:23px;top:517px">Trigger Slope</div>
  <div class="cb" style="left:119px;top:409px;width:74px">Edge</div>
  <div class="cb" style="left:119px;top:444px;width:74px">AUTO</div>
  <div class="cb" style="left:119px;top:479px;width:74px">CH1</div>
  <div class="cb" style="left:119px;top:514px;width:74px">+</div>
</div>
<div id="status" class="a">
  <span class="a" style="left:4px;top:3px">Running...</span>
  <span class="a" style="left:1260px;top:4px;white-space:nowrap;font-size:11px;word-spacing:1px">05-05-2015 11:24</span>
</div>
</body></html>
